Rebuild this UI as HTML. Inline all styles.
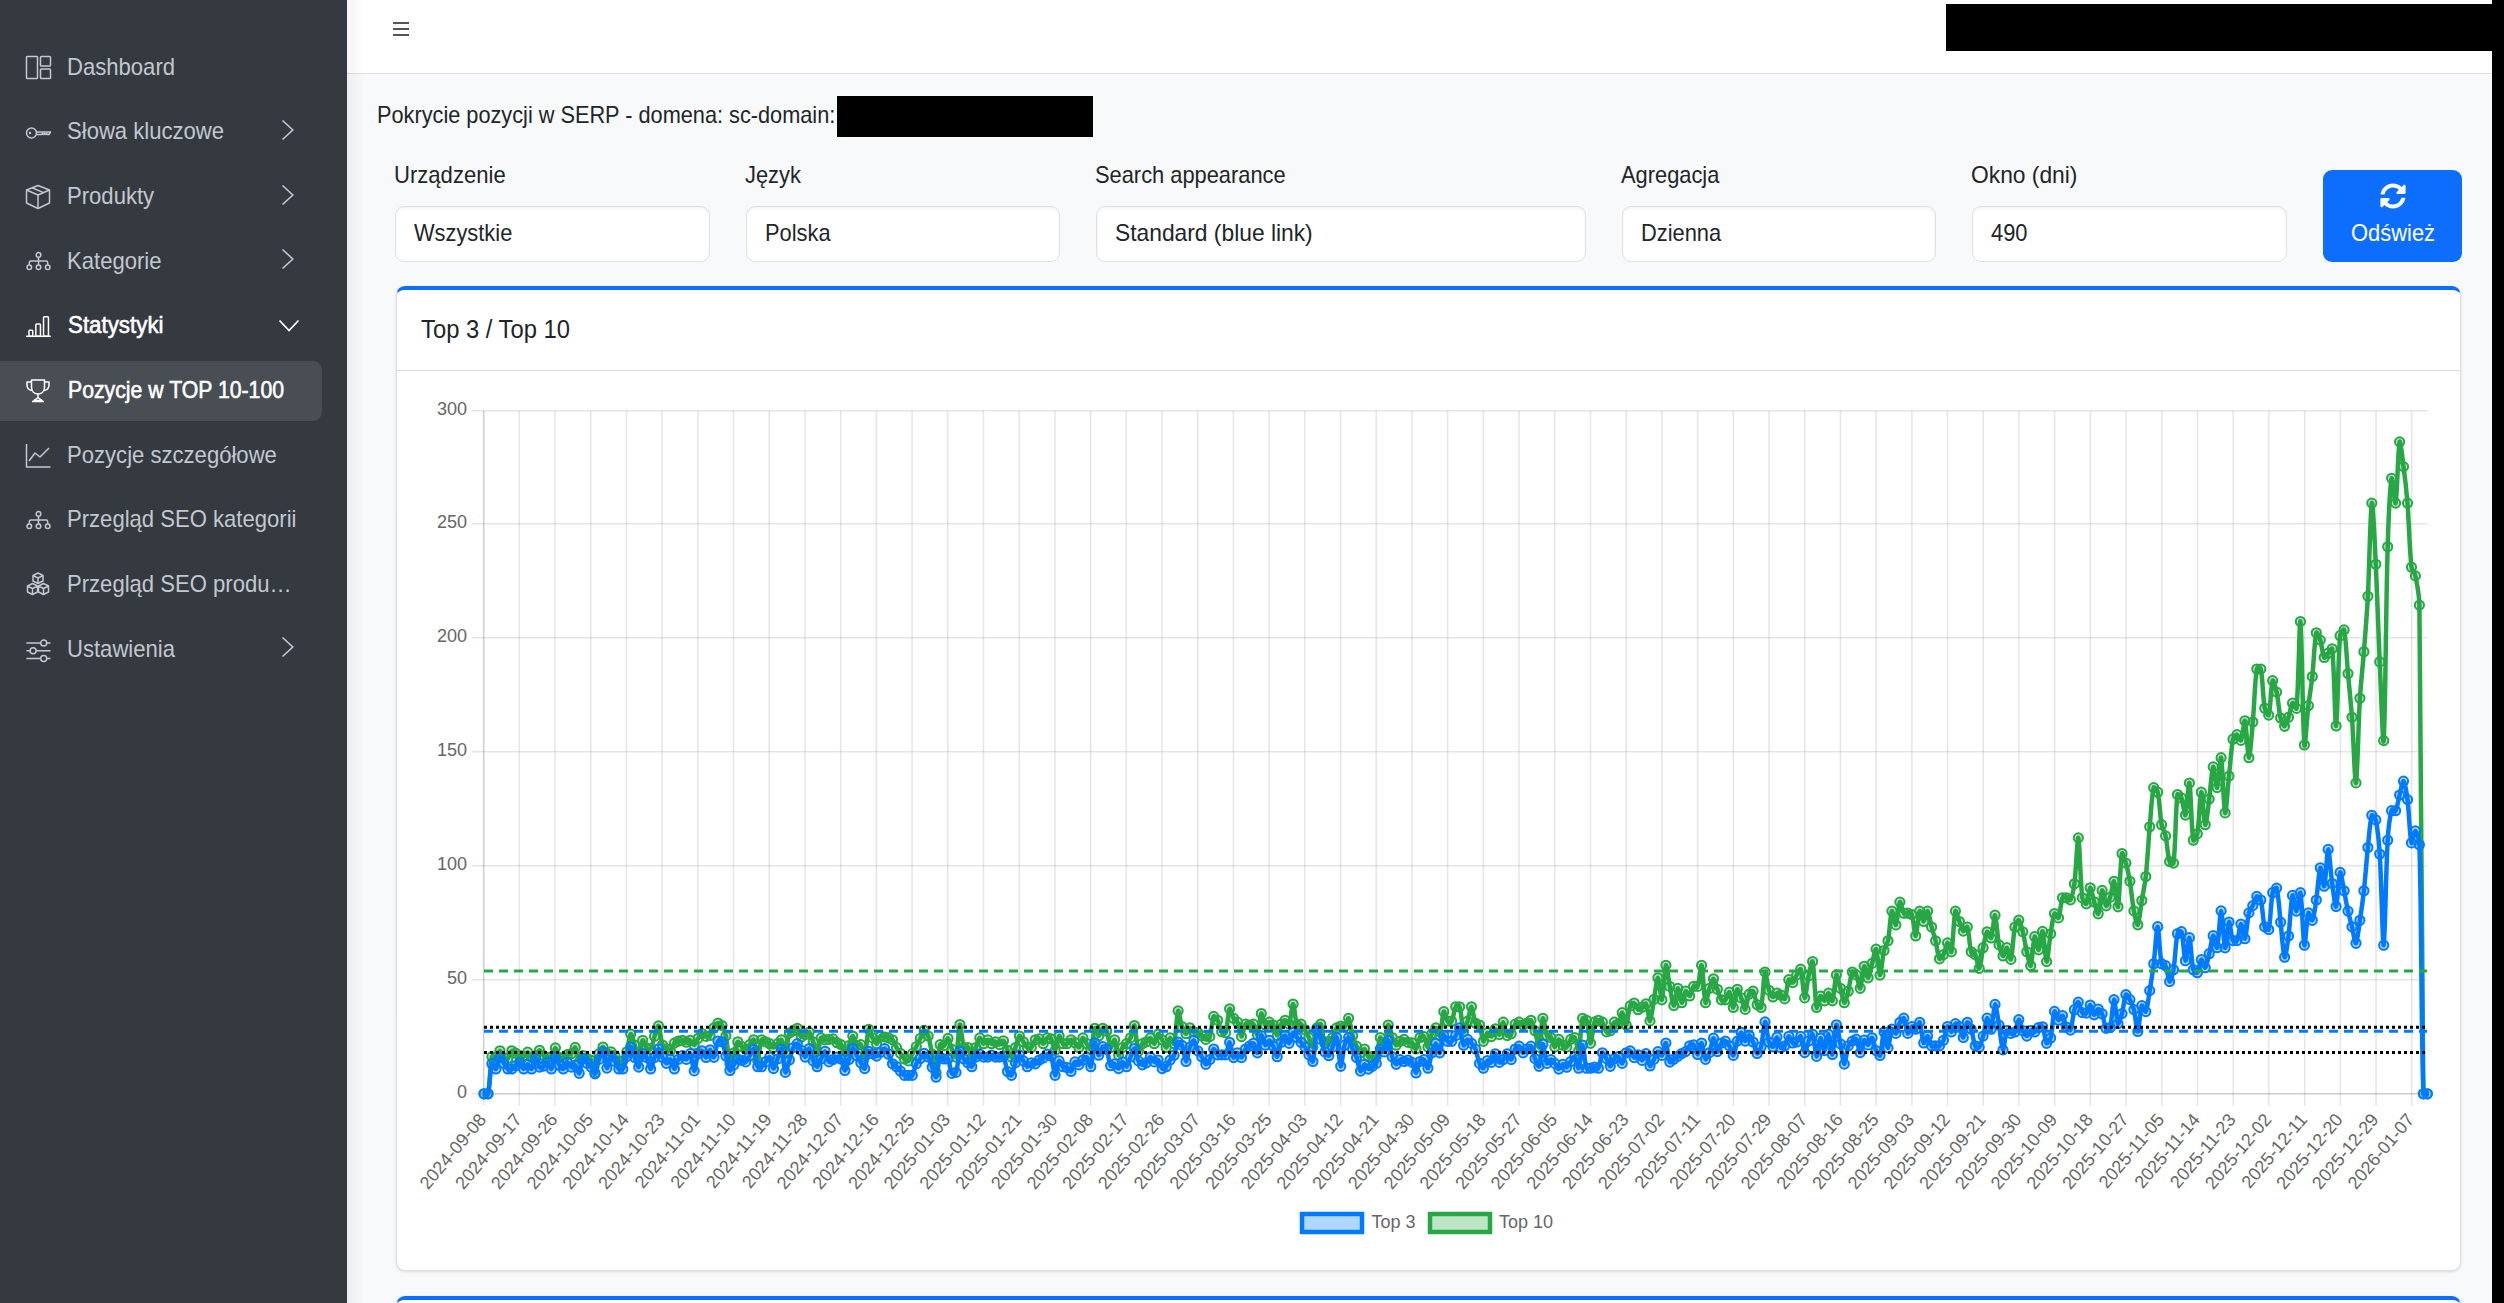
<!DOCTYPE html>
<html><head><meta charset="utf-8"><title>Pozycje w TOP 10-100</title>
<style>html,body{margin:0;padding:0;width:2504px;height:1303px;overflow:hidden;font-family:"Liberation Sans", sans-serif;background:#f8f9fa}</style>
</head><body>
<div style="position:absolute;left:347px;top:0;width:2145px;height:1303px;background:#f8f9fa"></div><div style="position:absolute;left:347px;top:0;width:2145px;height:73px;background:#fff;border-bottom:1px solid #dee2e6"></div><div style="position:absolute;left:393px;top:22px;width:16px;height:2px;background:#555"></div><div style="position:absolute;left:393px;top:28px;width:16px;height:2px;background:#555"></div><div style="position:absolute;left:393px;top:34px;width:16px;height:2px;background:#555"></div><div style="position:absolute;left:1946px;top:4px;width:546px;height:47px;background:#000"></div><div style="position:absolute;left:347px;top:0;width:18px;height:1303px;background:linear-gradient(to right,rgba(0,0,0,.045),rgba(0,0,0,0))"></div><div style="position:absolute;left:377.0px;top:101.3px;font-size:24px;line-height:normal;color:#212529;font-weight:400;white-space:nowrap;transform:scaleX(0.905);transform-origin:0 0;">Pokrycie pozycji w SERP - domena: sc-domain:</div><div style="position:absolute;left:837px;top:96px;width:256px;height:41px;background:#000"></div><div style="position:absolute;left:394.2px;top:161.2px;font-size:24px;line-height:normal;color:#212529;font-weight:400;white-space:nowrap;transform:scaleX(0.92);transform-origin:0 0;">Urządzenie</div><div style="position:absolute;left:395px;top:206px;width:315px;height:56px;box-sizing:border-box;background:#fff;border:1px solid #dee2e6;border-radius:9px;box-shadow:inset 0 1.5px 3px rgba(0,0,0,.05)"></div><div style="position:absolute;left:413.5px;top:218.9px;font-size:24px;line-height:normal;color:#212529;font-weight:400;white-space:nowrap;transform:scaleX(0.91);transform-origin:0 0;">Wszystkie</div><div style="position:absolute;left:745.2px;top:161.2px;font-size:24px;line-height:normal;color:#212529;font-weight:400;white-space:nowrap;transform:scaleX(0.91);transform-origin:0 0;">Język</div><div style="position:absolute;left:746px;top:206px;width:314px;height:56px;box-sizing:border-box;background:#fff;border:1px solid #dee2e6;border-radius:9px;box-shadow:inset 0 1.5px 3px rgba(0,0,0,.05)"></div><div style="position:absolute;left:764.5px;top:218.9px;font-size:24px;line-height:normal;color:#212529;font-weight:400;white-space:nowrap;transform:scaleX(0.91);transform-origin:0 0;">Polska</div><div style="position:absolute;left:1095.2px;top:161.2px;font-size:24px;line-height:normal;color:#212529;font-weight:400;white-space:nowrap;transform:scaleX(0.91);transform-origin:0 0;">Search appearance</div><div style="position:absolute;left:1096px;top:206px;width:490px;height:56px;box-sizing:border-box;background:#fff;border:1px solid #dee2e6;border-radius:9px;box-shadow:inset 0 1.5px 3px rgba(0,0,0,.05)"></div><div style="position:absolute;left:1114.5px;top:218.9px;font-size:24px;line-height:normal;color:#212529;font-weight:400;white-space:nowrap;transform:scaleX(0.95);transform-origin:0 0;">Standard (blue link)</div><div style="position:absolute;left:1621.2px;top:161.2px;font-size:24px;line-height:normal;color:#212529;font-weight:400;white-space:nowrap;transform:scaleX(0.91);transform-origin:0 0;">Agregacja</div><div style="position:absolute;left:1622px;top:206px;width:314px;height:56px;box-sizing:border-box;background:#fff;border:1px solid #dee2e6;border-radius:9px;box-shadow:inset 0 1.5px 3px rgba(0,0,0,.05)"></div><div style="position:absolute;left:1640.5px;top:218.9px;font-size:24px;line-height:normal;color:#212529;font-weight:400;white-space:nowrap;transform:scaleX(0.91);transform-origin:0 0;">Dzienna</div><div style="position:absolute;left:1971.2px;top:161.2px;font-size:24px;line-height:normal;color:#212529;font-weight:400;white-space:nowrap;transform:scaleX(0.95);transform-origin:0 0;">Okno (dni)</div><div style="position:absolute;left:1972px;top:206px;width:315px;height:56px;box-sizing:border-box;background:#fff;border:1px solid #dee2e6;border-radius:9px;box-shadow:inset 0 1.5px 3px rgba(0,0,0,.05)"></div><div style="position:absolute;left:1990.5px;top:218.9px;font-size:24px;line-height:normal;color:#212529;font-weight:400;white-space:nowrap;transform:scaleX(0.91);transform-origin:0 0;">490</div><div style="position:absolute;left:2323px;top:170px;width:139px;height:92px;background:#0d6efd;border-radius:9px"></div><svg style="position:absolute;left:2380px;top:183px" width="26" height="26" viewBox="0 0 512 512"><path fill="#fff" d="M370.72 133.28C339.458 104.008 298.888 87.962 255.848 88c-77.458.068-144.328 53.178-162.791 126.85-1.344 5.363-6.122 9.15-11.651 9.15H24.103c-7.498 0-13.194-6.807-11.807-14.176C33.933 94.924 134.813 8 256 8c66.448 0 126.791 26.136 171.315 68.685L463.03 40.97C478.149 25.851 504 36.559 504 57.941V192c0 13.255-10.745 24-24 24H345.941c-21.382 0-32.09-25.851-16.971-40.971l41.75-41.749zM32 296h134.059c21.382 0 32.09 25.851 16.971 40.971l-41.75 41.75c31.262 29.273 71.835 45.319 114.876 45.28 77.418-.07 144.315-53.144 162.787-126.849 1.344-5.363 6.122-9.15 11.651-9.15h57.304c7.498 0 13.194 6.807 11.807 14.176C478.067 417.076 377.187 504 256 504c-66.448 0-126.791-26.136-171.315-68.685L48.97 471.03C33.851 486.149 8 475.441 8 454.059V320c0-13.255 10.745-24 24-24z"/></svg><div style="position:absolute;left:2350.5px;top:219.3px;font-size:24px;line-height:normal;color:#fff;font-weight:400;white-space:nowrap;transform:scaleX(0.913);transform-origin:0 0;">Odśwież</div><div style="position:absolute;left:2492px;top:0;width:12px;height:1303px;background:#000"></div><div style="position:absolute;left:395.5px;top:286px;width:2065.5px;height:985px;box-sizing:border-box;background:#fff;border-radius:9px;border:1px solid rgba(0,0,0,.13);border-top:4px solid #0d6efd;box-shadow:0 1px 3px rgba(0,0,0,.12)"></div><div style="position:absolute;left:396px;top:369.5px;width:2064.5px;height:1.5px;background:#dedede"></div><div style="position:absolute;left:420.5px;top:313.5px;font-size:26px;line-height:normal;color:#212529;font-weight:400;white-space:nowrap;transform:scaleX(0.915);transform-origin:0 0;">Top 3 / Top 10</div><div style="position:absolute;left:395.5px;top:1296px;width:2065.5px;height:40px;box-sizing:border-box;background:#fff;border-radius:9px;border:1px solid rgba(0,0,0,.13);border-top:4px solid #0d6efd;box-shadow:0 1px 3px rgba(0,0,0,.12)"></div>
<div id="sb" style="position:absolute;left:0;top:0;width:347px;height:1303px;background:#343a40;"><div style="position:absolute;left:0;top:361px;width:322px;height:60px;background:rgba(255,255,255,.1);border-radius:0 9px 9px 0"></div><div style="position:absolute;left:67.0px;top:52.7px;font-size:24px;line-height:normal;color:#c2c7d0;font-weight:400;white-space:nowrap;transform:scaleX(0.92);transform-origin:0 0;">Dashboard</div><svg style="position:absolute;left:24.5px;top:54.9px" width="27" height="26" viewBox="0 0 27 26" fill="none" stroke="#c2c7d0" stroke-width="1.5" stroke-linejoin="round"><rect x="1.5" y="1.5" width="11" height="22" rx="0.8"/><rect x="15.5" y="1.5" width="10" height="9.5" rx="0.8"/><rect x="15.5" y="14" width="10" height="9.5" rx="0.8"/></svg><div style="position:absolute;left:67.0px;top:117.3px;font-size:24px;line-height:normal;color:#c2c7d0;font-weight:400;white-space:nowrap;transform:scaleX(0.92);transform-origin:0 0;">Słowa kluczowe</div><svg style="position:absolute;left:24.5px;top:119.6px" width="27" height="26" viewBox="0 0 27 26" fill="none" stroke="#c2c7d0" stroke-width="1.5" stroke-linejoin="round"><circle cx="6.5" cy="13" r="5"/><circle cx="5" cy="13" r="1.2" fill="#c2c7d0" stroke="none"/><path d="M11.5 12 H25.5 L24 14.5 H22.5 L21.5 13.5 L20.5 14.5 L19.5 13.5 L18.5 14.5 L17.5 13.5 L16.5 14.5 H11.5"/></svg><svg style="position:absolute;left:279.5px;top:119.1px" width="16" height="22" viewBox="0 0 16 22" fill="none" stroke="#c2c7d0" stroke-width="1.6"><path d="M2.5 1.5 L12.8 11 L2.5 20.5"/></svg><div style="position:absolute;left:67.0px;top:182.0px;font-size:24px;line-height:normal;color:#c2c7d0;font-weight:400;white-space:nowrap;transform:scaleX(0.92);transform-origin:0 0;">Produkty</div><svg style="position:absolute;left:24.5px;top:184.2px" width="27" height="26" viewBox="0 0 27 26" fill="none" stroke="#c2c7d0" stroke-width="1.5" stroke-linejoin="round"><path d="M13 1.5 L24.5 6 V19 L13 24.5 L1.5 19 V6 Z"/><path d="M1.5 6 L13 11 L24.5 6"/><path d="M13 11 V24.5"/><path d="M7 3.8 L18.5 8.6"/></svg><svg style="position:absolute;left:279.5px;top:183.7px" width="16" height="22" viewBox="0 0 16 22" fill="none" stroke="#c2c7d0" stroke-width="1.6"><path d="M2.5 1.5 L12.8 11 L2.5 20.5"/></svg><div style="position:absolute;left:67.0px;top:246.7px;font-size:24px;line-height:normal;color:#c2c7d0;font-weight:400;white-space:nowrap;transform:scaleX(0.92);transform-origin:0 0;">Kategorie</div><svg style="position:absolute;left:24.5px;top:248.9px" width="27" height="26" viewBox="0 0 27 26" fill="none" stroke="#c2c7d0" stroke-width="1.5" stroke-linejoin="round"><circle cx="13.5" cy="5.9" r="2.3"/><path d="M13.5 8.2 V15.9 M4.3 15.8 V13.5 Q4.3 11.9 5.9 11.9 H21.1 Q22.7 11.9 22.7 13.5 V15.8"/><circle cx="4.3" cy="18.2" r="2.3"/><circle cx="13.5" cy="18.2" r="2.3"/><circle cx="22.7" cy="18.2" r="2.3"/></svg><svg style="position:absolute;left:279.5px;top:248.4px" width="16" height="22" viewBox="0 0 16 22" fill="none" stroke="#c2c7d0" stroke-width="1.6"><path d="M2.5 1.5 L12.8 11 L2.5 20.5"/></svg><div style="position:absolute;left:67.5px;top:311.4px;font-size:24px;line-height:normal;color:#ffffff;font-weight:400;white-space:nowrap;transform:scaleX(0.93);transform-origin:0 0;-webkit-text-stroke:0.6px #fff;">Statystyki</div><svg style="position:absolute;left:24.5px;top:313.6px" width="27" height="26" viewBox="0 0 27 26" fill="none" stroke="#ffffff" stroke-width="1.5" stroke-linejoin="round"><path d="M1 22.3 H25.8"/><rect x="3.95" y="16.2" width="3.8" height="6.1" rx="0.8"/><rect x="10.85" y="10" width="4.6" height="12.3" rx="0.8"/><rect x="18.55" y="2.8" width="4.9" height="19.5" rx="0.8"/></svg><svg style="position:absolute;left:277px;top:319.1px" width="24" height="14" viewBox="0 0 24 14" fill="none" stroke="#fff" stroke-width="1.8"><path d="M2.5 1.5 L12 11.5 L21.5 1.5"/></svg><div style="position:absolute;left:67.5px;top:376.0px;font-size:24px;line-height:normal;color:#ffffff;font-weight:400;white-space:nowrap;transform:scaleX(0.885);transform-origin:0 0;-webkit-text-stroke:0.6px #fff;">Pozycje w TOP 10-100</div><svg style="position:absolute;left:24.5px;top:378.2px" width="27" height="26" viewBox="0 0 27 26" fill="none" stroke="#ffffff" stroke-width="1.5" stroke-linejoin="round"><path d="M6.5 2 H19.5 V9 C19.5 13.5 16.5 16 13 16 C9.5 16 6.5 13.5 6.5 9 Z"/><path d="M6.5 4 H2 V7 C2 10 4 12 7 12.5 M19.5 4 H24 V7 C24 10 22 12 19 12.5"/><path d="M13 16 V19 C13 20.5 10 21.5 9 22.5 H17 C16 21.5 13 20.5 13 19"/><path d="M7 23.5 H19"/></svg><div style="position:absolute;left:67.0px;top:440.7px;font-size:24px;line-height:normal;color:#c2c7d0;font-weight:400;white-space:nowrap;transform:scaleX(0.92);transform-origin:0 0;">Pozycje szczegółowe</div><svg style="position:absolute;left:24.5px;top:442.9px" width="27" height="26" viewBox="0 0 27 26" fill="none" stroke="#c2c7d0" stroke-width="1.5" stroke-linejoin="round"><path d="M1.5 1 V24 H25.5"/><path d="M4 18 L10 10 L15 14 L24 5"/></svg><div style="position:absolute;left:67.0px;top:505.4px;font-size:24px;line-height:normal;color:#c2c7d0;font-weight:400;white-space:nowrap;transform:scaleX(0.92);transform-origin:0 0;">Przegląd SEO kategorii</div><svg style="position:absolute;left:24.5px;top:507.6px" width="27" height="26" viewBox="0 0 27 26" fill="none" stroke="#c2c7d0" stroke-width="1.5" stroke-linejoin="round"><circle cx="13.5" cy="5.9" r="2.3"/><path d="M13.5 8.2 V15.9 M4.3 15.8 V13.5 Q4.3 11.9 5.9 11.9 H21.1 Q22.7 11.9 22.7 13.5 V15.8"/><circle cx="4.3" cy="18.2" r="2.3"/><circle cx="13.5" cy="18.2" r="2.3"/><circle cx="22.7" cy="18.2" r="2.3"/></svg><div style="position:absolute;left:67.0px;top:570.0px;font-size:24px;line-height:normal;color:#c2c7d0;font-weight:400;white-space:nowrap;transform:scaleX(0.92);transform-origin:0 0;">Przegląd SEO produ…</div><svg style="position:absolute;left:24.5px;top:572.3px" width="27" height="26" viewBox="0 0 27 26" fill="none" stroke="#c2c7d0" stroke-width="1.5" stroke-linejoin="round"><path d="M13 1 L18 3.5 V9 L13 11.5 L8 9 V3.5 Z M8 3.5 L13 6 L18 3.5 M13 6 V11.5"/><path d="M7.5 11.5 L12.5 14 V20 L7.5 22.5 L2.5 20 V14 Z M2.5 14 L7.5 16.5 L12.5 14 M7.5 16.5 V22.5"/><path d="M18.5 11.5 L23.5 14 V20 L18.5 22.5 L13.5 20 V14 Z M13.5 14 L18.5 16.5 L23.5 14 M18.5 16.5 V22.5"/></svg><div style="position:absolute;left:67.0px;top:634.7px;font-size:24px;line-height:normal;color:#c2c7d0;font-weight:400;white-space:nowrap;transform:scaleX(0.92);transform-origin:0 0;">Ustawienia</div><svg style="position:absolute;left:24.5px;top:636.9px" width="27" height="26" viewBox="0 0 27 26" fill="none" stroke="#c2c7d0" stroke-width="1.5" stroke-linejoin="round"><path d="M1.4 6.1 H15.7 M21.7 6.1 H25.5 M1.4 13.8 H5.1 M11.1 13.8 H25.5 M1.4 21.4 H15.7 M21.7 21.4 H25.5"/><circle cx="18.7" cy="6.1" r="3"/><circle cx="8.1" cy="13.8" r="3"/><circle cx="18.7" cy="21.4" r="3"/></svg><svg style="position:absolute;left:279.5px;top:636.4px" width="16" height="22" viewBox="0 0 16 22" fill="none" stroke="#c2c7d0" stroke-width="1.6"><path d="M2.5 1.5 L12.8 11 L2.5 20.5"/></svg></div>
<svg style="position:absolute;left:0;top:0" width="2504" height="1303" viewBox="0 0 2504 1303" font-family="Liberation Sans, sans-serif"><path d="M483.60 410.8V1105.7 M519.31 410.8V1105.7 M555.01 410.8V1105.7 M590.72 410.8V1105.7 M626.42 410.8V1105.7 M662.13 410.8V1105.7 M697.84 410.8V1105.7 M733.54 410.8V1105.7 M769.25 410.8V1105.7 M804.95 410.8V1105.7 M840.66 410.8V1105.7 M876.37 410.8V1105.7 M912.07 410.8V1105.7 M947.78 410.8V1105.7 M983.48 410.8V1105.7 M1019.19 410.8V1105.7 M1054.90 410.8V1105.7 M1090.60 410.8V1105.7 M1126.31 410.8V1105.7 M1162.01 410.8V1105.7 M1197.72 410.8V1105.7 M1233.43 410.8V1105.7 M1269.13 410.8V1105.7 M1304.84 410.8V1105.7 M1340.54 410.8V1105.7 M1376.25 410.8V1105.7 M1411.96 410.8V1105.7 M1447.66 410.8V1105.7 M1483.37 410.8V1105.7 M1519.07 410.8V1105.7 M1554.78 410.8V1105.7 M1590.49 410.8V1105.7 M1626.19 410.8V1105.7 M1661.90 410.8V1105.7 M1697.60 410.8V1105.7 M1733.31 410.8V1105.7 M1769.02 410.8V1105.7 M1804.72 410.8V1105.7 M1840.43 410.8V1105.7 M1876.13 410.8V1105.7 M1911.84 410.8V1105.7 M1947.55 410.8V1105.7 M1983.25 410.8V1105.7 M2018.96 410.8V1105.7 M2054.66 410.8V1105.7 M2090.37 410.8V1105.7 M2126.08 410.8V1105.7 M2161.78 410.8V1105.7 M2197.49 410.8V1105.7 M2233.19 410.8V1105.7 M2268.90 410.8V1105.7 M2304.61 410.8V1105.7 M2340.31 410.8V1105.7 M2376.02 410.8V1105.7 M2411.72 410.8V1105.7" stroke="rgba(0,0,0,0.1)" stroke-width="1.5" fill="none"/><path d="M472 1093.80H2427.5 M472 979.80H2427.5 M472 865.80H2427.5 M472 751.80H2427.5 M472 637.80H2427.5 M472 523.80H2427.5 M472 410.80H2427.5" stroke="rgba(0,0,0,0.1)" stroke-width="1.5" fill="none"/><path d="M483.8 410.8V1093.8 M483.6 1093.8H2427.5" stroke="rgba(0,0,0,0.1)" stroke-width="1.5" fill="none"/><text x="467" y="1098.3" font-size="18" fill="#666" text-anchor="end">0</text><text x="467" y="984.3" font-size="18" fill="#666" text-anchor="end">50</text><text x="467" y="870.3" font-size="18" fill="#666" text-anchor="end">100</text><text x="467" y="756.3" font-size="18" fill="#666" text-anchor="end">150</text><text x="467" y="642.3" font-size="18" fill="#666" text-anchor="end">200</text><text x="467" y="528.3" font-size="18" fill="#666" text-anchor="end">250</text><text x="467" y="415.3" font-size="18" fill="#666" text-anchor="end">300</text><text transform="translate(487.1,1120) rotate(-50)" font-size="18" fill="#666" text-anchor="end">2024-09-08</text><text transform="translate(522.8,1120) rotate(-50)" font-size="18" fill="#666" text-anchor="end">2024-09-17</text><text transform="translate(558.5,1120) rotate(-50)" font-size="18" fill="#666" text-anchor="end">2024-09-26</text><text transform="translate(594.2,1120) rotate(-50)" font-size="18" fill="#666" text-anchor="end">2024-10-05</text><text transform="translate(629.9,1120) rotate(-50)" font-size="18" fill="#666" text-anchor="end">2024-10-14</text><text transform="translate(665.6,1120) rotate(-50)" font-size="18" fill="#666" text-anchor="end">2024-10-23</text><text transform="translate(701.3,1120) rotate(-50)" font-size="18" fill="#666" text-anchor="end">2024-11-01</text><text transform="translate(737.0,1120) rotate(-50)" font-size="18" fill="#666" text-anchor="end">2024-11-10</text><text transform="translate(772.7,1120) rotate(-50)" font-size="18" fill="#666" text-anchor="end">2024-11-19</text><text transform="translate(808.5,1120) rotate(-50)" font-size="18" fill="#666" text-anchor="end">2024-11-28</text><text transform="translate(844.2,1120) rotate(-50)" font-size="18" fill="#666" text-anchor="end">2024-12-07</text><text transform="translate(879.9,1120) rotate(-50)" font-size="18" fill="#666" text-anchor="end">2024-12-16</text><text transform="translate(915.6,1120) rotate(-50)" font-size="18" fill="#666" text-anchor="end">2024-12-25</text><text transform="translate(951.3,1120) rotate(-50)" font-size="18" fill="#666" text-anchor="end">2025-01-03</text><text transform="translate(987.0,1120) rotate(-50)" font-size="18" fill="#666" text-anchor="end">2025-01-12</text><text transform="translate(1022.7,1120) rotate(-50)" font-size="18" fill="#666" text-anchor="end">2025-01-21</text><text transform="translate(1058.4,1120) rotate(-50)" font-size="18" fill="#666" text-anchor="end">2025-01-30</text><text transform="translate(1094.1,1120) rotate(-50)" font-size="18" fill="#666" text-anchor="end">2025-02-08</text><text transform="translate(1129.8,1120) rotate(-50)" font-size="18" fill="#666" text-anchor="end">2025-02-17</text><text transform="translate(1165.5,1120) rotate(-50)" font-size="18" fill="#666" text-anchor="end">2025-02-26</text><text transform="translate(1201.2,1120) rotate(-50)" font-size="18" fill="#666" text-anchor="end">2025-03-07</text><text transform="translate(1236.9,1120) rotate(-50)" font-size="18" fill="#666" text-anchor="end">2025-03-16</text><text transform="translate(1272.6,1120) rotate(-50)" font-size="18" fill="#666" text-anchor="end">2025-03-25</text><text transform="translate(1308.3,1120) rotate(-50)" font-size="18" fill="#666" text-anchor="end">2025-04-03</text><text transform="translate(1344.0,1120) rotate(-50)" font-size="18" fill="#666" text-anchor="end">2025-04-12</text><text transform="translate(1379.8,1120) rotate(-50)" font-size="18" fill="#666" text-anchor="end">2025-04-21</text><text transform="translate(1415.5,1120) rotate(-50)" font-size="18" fill="#666" text-anchor="end">2025-04-30</text><text transform="translate(1451.2,1120) rotate(-50)" font-size="18" fill="#666" text-anchor="end">2025-05-09</text><text transform="translate(1486.9,1120) rotate(-50)" font-size="18" fill="#666" text-anchor="end">2025-05-18</text><text transform="translate(1522.6,1120) rotate(-50)" font-size="18" fill="#666" text-anchor="end">2025-05-27</text><text transform="translate(1558.3,1120) rotate(-50)" font-size="18" fill="#666" text-anchor="end">2025-06-05</text><text transform="translate(1594.0,1120) rotate(-50)" font-size="18" fill="#666" text-anchor="end">2025-06-14</text><text transform="translate(1629.7,1120) rotate(-50)" font-size="18" fill="#666" text-anchor="end">2025-06-23</text><text transform="translate(1665.4,1120) rotate(-50)" font-size="18" fill="#666" text-anchor="end">2025-07-02</text><text transform="translate(1701.1,1120) rotate(-50)" font-size="18" fill="#666" text-anchor="end">2025-07-11</text><text transform="translate(1736.8,1120) rotate(-50)" font-size="18" fill="#666" text-anchor="end">2025-07-20</text><text transform="translate(1772.5,1120) rotate(-50)" font-size="18" fill="#666" text-anchor="end">2025-07-29</text><text transform="translate(1808.2,1120) rotate(-50)" font-size="18" fill="#666" text-anchor="end">2025-08-07</text><text transform="translate(1843.9,1120) rotate(-50)" font-size="18" fill="#666" text-anchor="end">2025-08-16</text><text transform="translate(1879.6,1120) rotate(-50)" font-size="18" fill="#666" text-anchor="end">2025-08-25</text><text transform="translate(1915.3,1120) rotate(-50)" font-size="18" fill="#666" text-anchor="end">2025-09-03</text><text transform="translate(1951.0,1120) rotate(-50)" font-size="18" fill="#666" text-anchor="end">2025-09-12</text><text transform="translate(1986.8,1120) rotate(-50)" font-size="18" fill="#666" text-anchor="end">2025-09-21</text><text transform="translate(2022.5,1120) rotate(-50)" font-size="18" fill="#666" text-anchor="end">2025-09-30</text><text transform="translate(2058.2,1120) rotate(-50)" font-size="18" fill="#666" text-anchor="end">2025-10-09</text><text transform="translate(2093.9,1120) rotate(-50)" font-size="18" fill="#666" text-anchor="end">2025-10-18</text><text transform="translate(2129.6,1120) rotate(-50)" font-size="18" fill="#666" text-anchor="end">2025-10-27</text><text transform="translate(2165.3,1120) rotate(-50)" font-size="18" fill="#666" text-anchor="end">2025-11-05</text><text transform="translate(2201.0,1120) rotate(-50)" font-size="18" fill="#666" text-anchor="end">2025-11-14</text><text transform="translate(2236.7,1120) rotate(-50)" font-size="18" fill="#666" text-anchor="end">2025-11-23</text><text transform="translate(2272.4,1120) rotate(-50)" font-size="18" fill="#666" text-anchor="end">2025-12-02</text><text transform="translate(2308.1,1120) rotate(-50)" font-size="18" fill="#666" text-anchor="end">2025-12-11</text><text transform="translate(2343.8,1120) rotate(-50)" font-size="18" fill="#666" text-anchor="end">2025-12-20</text><text transform="translate(2379.5,1120) rotate(-50)" font-size="18" fill="#666" text-anchor="end">2025-12-29</text><text transform="translate(2415.2,1120) rotate(-50)" font-size="18" fill="#666" text-anchor="end">2026-01-07</text><path d="M484.0 1093.8C485.2 1093.8 487.7 1093.8 488.0 1093.8C490.1 1083.7 489.8 1066.4 491.9 1056.6C492.2 1055.5 495.1 1058.1 495.9 1057.5C497.5 1056.4 498.7 1050.8 499.9 1050.8C501.1 1050.8 502.3 1056.0 503.8 1057.5C504.6 1058.3 507.0 1059.1 507.8 1058.5C509.4 1057.1 510.2 1051.8 511.8 1050.8C512.6 1050.2 514.5 1052.5 515.7 1053.2C516.9 1053.9 518.4 1055.1 519.7 1055.6C520.8 1056.1 522.7 1057.0 523.7 1056.6C525.1 1056.0 526.5 1052.1 527.6 1052.2C528.9 1052.4 530.2 1056.9 531.6 1057.5C532.5 1057.9 534.6 1056.5 535.6 1055.6C537.0 1054.3 538.3 1050.3 539.5 1050.3C540.7 1050.3 542.1 1054.3 543.5 1055.6C544.4 1056.5 546.2 1057.4 547.5 1057.5C548.6 1057.6 550.7 1057.4 551.4 1056.6C553.1 1054.5 554.3 1047.8 555.4 1047.9C556.6 1048.1 557.6 1055.4 559.4 1057.5C560.0 1058.3 562.3 1057.9 563.3 1057.5C564.6 1057.0 566.0 1055.3 567.3 1054.6C568.4 1054.1 570.4 1054.4 571.3 1053.7C572.8 1052.3 574.4 1046.6 575.2 1047.4C576.8 1049.2 577.6 1060.7 579.2 1062.3C580.0 1063.1 581.7 1056.3 583.1 1055.6C584.1 1055.1 585.9 1057.7 587.1 1058.5C588.2 1059.1 590.5 1059.3 591.1 1060.4C592.9 1063.6 594.1 1073.7 595.0 1072.8C596.5 1071.6 597.3 1059.2 599.0 1053.7C599.7 1051.5 601.8 1047.0 603.0 1047.0C604.2 1047.0 605.4 1052.8 606.9 1053.7C607.8 1054.2 609.9 1051.5 610.9 1051.8C612.2 1052.1 613.8 1054.3 614.9 1055.6C616.2 1057.2 617.3 1060.2 618.8 1061.3C619.7 1062.0 622.2 1062.1 622.8 1061.3C624.5 1059.3 625.9 1054.7 626.8 1051.8C628.3 1046.5 629.3 1035.3 630.7 1034.0C631.7 1033.2 633.6 1041.7 634.7 1045.0C636.0 1048.8 637.7 1058.1 638.7 1057.5C640.0 1056.7 641.0 1042.2 642.6 1040.3C643.4 1039.3 645.0 1046.2 646.6 1047.9C647.4 1048.8 650.0 1049.7 650.6 1048.9C652.4 1046.3 653.3 1040.1 654.5 1036.4C655.6 1033.2 657.6 1024.9 658.5 1025.9C660.0 1027.5 660.6 1039.7 662.5 1045.0C663.0 1046.6 665.1 1047.9 666.4 1048.9C667.5 1049.6 669.6 1051.4 670.4 1050.8C672.0 1049.7 672.8 1045.0 674.4 1043.1C675.2 1042.2 677.1 1041.7 678.3 1041.2C679.5 1040.8 681.2 1040.1 682.3 1040.3C683.5 1040.4 685.1 1042.2 686.3 1042.2C687.5 1042.2 689.2 1039.9 690.2 1040.3C691.6 1040.8 693.1 1045.3 694.2 1045.0C695.5 1044.7 696.8 1040.3 698.2 1038.3C699.2 1036.8 700.8 1033.9 702.1 1033.5C703.2 1033.3 704.8 1036.1 706.1 1036.4C707.2 1036.7 709.3 1036.3 710.1 1035.5C711.7 1033.7 712.6 1030.0 714.0 1027.8C715.0 1026.2 716.6 1023.4 718.0 1023.0C719.0 1022.7 721.3 1024.3 722.0 1025.5C723.6 1028.2 725.2 1032.7 725.9 1036.0C727.6 1044.2 728.2 1060.3 729.9 1063.8C730.6 1065.3 732.7 1056.1 733.9 1052.8C735.0 1049.5 736.3 1043.0 737.8 1041.8C738.6 1041.1 740.5 1045.3 741.8 1046.6C742.8 1047.6 744.7 1049.7 745.8 1049.4C747.1 1049.1 748.5 1046.1 749.7 1044.6C750.9 1043.2 753.2 1038.7 753.7 1039.8C755.5 1043.6 756.5 1060.9 757.7 1060.9C758.8 1060.9 759.6 1044.6 761.6 1039.8C762.0 1038.9 764.4 1041.2 765.6 1041.8C766.8 1042.3 768.5 1042.9 769.6 1043.7C770.9 1044.6 772.3 1047.5 773.5 1047.5C774.7 1047.5 776.3 1044.8 777.5 1043.7C778.7 1042.5 780.8 1039.0 781.5 1039.8C783.2 1041.9 784.5 1054.1 785.4 1053.3C786.8 1052.1 787.4 1038.6 789.4 1033.1C789.8 1031.9 792.2 1031.5 793.3 1030.7C794.5 1030.0 796.5 1027.7 797.3 1028.3C798.9 1029.6 799.7 1035.7 801.3 1037.0C802.1 1037.6 804.1 1035.3 805.2 1034.6C806.4 1033.9 808.5 1031.5 809.2 1032.2C810.9 1033.7 812.2 1038.8 813.2 1041.8C814.5 1045.7 816.1 1055.7 817.1 1055.2C818.5 1054.5 819.2 1041.6 821.1 1037.9C821.6 1037.0 823.8 1039.6 825.1 1039.8C826.2 1040.0 827.9 1039.5 829.0 1039.4C830.2 1039.2 832.0 1038.5 833.0 1038.9C834.4 1039.5 835.7 1041.8 837.0 1042.7C838.0 1043.5 840.3 1043.6 840.9 1044.6C842.7 1047.3 843.7 1055.0 844.9 1055.2C846.0 1055.3 847.7 1048.5 848.9 1045.6C850.1 1042.7 851.6 1036.0 852.8 1036.0C854.0 1036.0 855.1 1043.7 856.8 1045.6C857.5 1046.3 860.2 1043.8 860.8 1044.6C862.6 1047.3 864.0 1058.6 864.7 1057.1C866.4 1054.0 866.9 1033.6 868.7 1029.3C869.3 1027.8 871.3 1035.4 872.7 1037.9C873.7 1039.8 875.6 1043.9 876.6 1043.7C877.9 1043.4 879.0 1037.4 880.6 1036.0C881.4 1035.4 883.4 1036.7 884.6 1037.0C885.8 1037.3 887.4 1037.5 888.5 1037.9C889.8 1038.4 891.7 1038.9 892.5 1039.8C894.1 1041.7 895.1 1045.3 896.5 1047.5C897.5 1049.3 899.2 1051.5 900.4 1053.3C901.6 1055.0 902.9 1057.6 904.4 1059.0C905.3 1059.9 907.5 1061.5 908.4 1060.9C909.9 1059.9 911.1 1055.9 912.3 1053.7C913.5 1051.6 915.2 1048.7 916.3 1046.6C917.5 1044.1 919.1 1040.8 920.3 1038.4C921.4 1036.0 922.9 1030.7 924.2 1030.3C925.3 1029.9 927.5 1034.0 928.2 1036.0C929.9 1041.2 931.0 1048.8 932.2 1054.2C933.3 1059.7 935.2 1073.6 936.1 1072.4C937.6 1070.7 938.0 1051.7 940.1 1044.6C940.4 1043.6 943.3 1046.2 944.1 1045.6C945.6 1044.3 947.0 1037.9 948.0 1038.4C949.4 1039.1 950.6 1046.2 952.0 1049.4C953.0 1051.8 955.5 1058.7 956.0 1057.1C957.8 1051.2 958.5 1026.2 959.9 1024.5C960.9 1023.3 961.9 1041.6 963.9 1047.5C964.2 1048.5 967.2 1046.7 967.9 1047.5C969.6 1049.6 970.6 1057.1 971.8 1057.1C973.0 1057.1 974.6 1050.4 975.8 1047.5C977.0 1044.6 978.3 1038.6 979.8 1037.9C980.7 1037.5 982.4 1043.4 983.7 1043.7C984.8 1043.9 986.5 1039.8 987.7 1039.8C988.9 1039.8 990.3 1043.4 991.6 1043.7C992.7 1043.9 994.5 1041.6 995.6 1041.8C996.9 1041.9 998.5 1044.8 999.6 1044.6C1000.8 1044.5 1002.7 1040.2 1003.5 1040.8C1005.1 1041.9 1006.2 1047.6 1007.5 1050.4C1008.5 1052.5 1010.5 1057.5 1011.5 1057.1C1012.8 1056.6 1014.3 1050.4 1015.4 1047.5C1016.7 1044.1 1017.9 1037.1 1019.4 1036.0C1020.3 1035.4 1022.2 1040.0 1023.4 1041.8C1024.6 1043.5 1025.8 1046.4 1027.3 1047.5C1028.2 1048.1 1030.6 1048.2 1031.3 1047.5C1032.9 1045.9 1033.7 1041.6 1035.3 1039.8C1036.0 1039.0 1038.3 1038.4 1039.2 1038.9C1040.7 1039.6 1042.1 1043.8 1043.2 1043.7C1044.5 1043.5 1045.7 1038.8 1047.2 1037.9C1048.0 1037.4 1050.5 1037.9 1051.1 1038.9C1052.9 1041.7 1054.0 1050.8 1055.1 1050.4C1056.4 1049.9 1057.6 1037.3 1059.1 1036.0C1059.9 1035.3 1061.4 1042.1 1063.0 1043.7C1063.8 1044.4 1066.0 1044.2 1067.0 1043.7C1068.4 1043.0 1069.7 1040.0 1071.0 1039.8C1072.1 1039.7 1073.9 1041.7 1074.9 1042.7C1076.3 1044.0 1078.0 1048.0 1078.9 1047.5C1080.4 1046.6 1081.4 1038.6 1082.9 1037.9C1083.8 1037.5 1085.6 1042.0 1086.8 1043.7C1088.0 1045.4 1090.2 1050.6 1090.8 1049.4C1092.6 1046.0 1093.1 1031.2 1094.8 1028.3C1095.4 1027.2 1097.5 1036.0 1098.7 1036.0C1099.9 1036.0 1101.2 1029.3 1102.7 1028.3C1103.6 1027.8 1106.1 1029.9 1106.7 1031.2C1108.5 1035.7 1109.1 1045.8 1110.6 1047.5C1111.4 1048.4 1113.8 1039.0 1114.6 1039.8C1116.1 1041.3 1117.0 1053.7 1118.6 1055.2C1119.4 1056.0 1121.1 1049.6 1122.5 1047.5C1123.5 1046.2 1125.4 1044.9 1126.5 1043.7C1127.8 1042.1 1129.6 1039.8 1130.5 1037.9C1132.0 1034.4 1133.6 1024.1 1134.4 1025.5C1136.0 1028.1 1136.6 1047.2 1138.4 1051.3C1139.0 1052.7 1140.8 1045.6 1142.4 1043.7C1143.2 1042.7 1145.3 1042.5 1146.3 1041.8C1147.6 1040.8 1149.2 1037.7 1150.3 1037.9C1151.6 1038.2 1153.3 1044.1 1154.3 1043.7C1155.7 1043.0 1156.8 1034.8 1158.2 1034.1C1159.2 1033.6 1161.1 1038.0 1162.2 1039.8C1163.5 1042.1 1165.1 1047.8 1166.2 1047.5C1167.5 1047.2 1168.7 1038.6 1170.1 1037.9C1171.1 1037.5 1173.7 1045.1 1174.1 1043.7C1176.0 1037.0 1176.5 1014.3 1178.1 1010.9C1178.8 1009.2 1180.4 1022.1 1182.0 1026.7C1182.8 1029.0 1184.7 1033.5 1186.0 1033.7C1187.1 1033.8 1188.6 1028.2 1189.9 1027.9C1191.0 1027.7 1192.5 1030.9 1193.9 1031.8C1194.9 1032.4 1196.8 1032.2 1197.9 1032.7C1199.2 1033.3 1200.7 1034.6 1201.8 1035.6C1203.1 1036.7 1204.6 1039.3 1205.8 1039.4C1206.9 1039.6 1209.3 1037.9 1209.8 1036.6C1211.7 1031.0 1211.9 1020.3 1213.7 1016.4C1214.2 1015.4 1217.0 1018.8 1217.7 1020.3C1219.3 1023.4 1219.9 1029.0 1221.7 1031.8C1222.3 1032.7 1225.3 1033.7 1225.6 1032.7C1227.7 1026.8 1227.9 1011.8 1229.6 1008.8C1230.3 1007.5 1232.0 1015.7 1233.6 1018.3C1234.4 1019.7 1236.9 1020.7 1237.5 1022.2C1239.3 1026.2 1240.2 1036.2 1241.5 1036.6C1242.6 1036.8 1243.7 1026.7 1245.5 1024.1C1246.0 1023.3 1248.2 1025.0 1249.4 1025.0C1250.6 1025.0 1252.8 1023.3 1253.4 1024.1C1255.2 1026.2 1256.6 1035.7 1257.4 1034.6C1258.9 1032.6 1259.8 1015.4 1261.3 1013.5C1262.2 1012.5 1263.6 1023.2 1265.3 1025.0C1266.0 1025.8 1268.1 1022.2 1269.3 1022.2C1270.5 1022.2 1272.5 1023.8 1273.2 1025.0C1274.9 1027.9 1276.1 1035.7 1277.2 1035.6C1278.4 1035.4 1279.5 1027.3 1281.2 1024.1C1281.9 1022.7 1283.9 1020.3 1285.1 1020.3C1286.3 1020.3 1288.6 1025.1 1289.1 1024.1C1291.0 1020.2 1291.9 1003.8 1293.1 1004.0C1294.3 1004.1 1295.0 1020.0 1297.0 1025.0C1297.4 1026.0 1300.1 1023.6 1301.0 1024.1C1302.5 1025.0 1303.9 1028.0 1305.0 1029.8C1306.3 1032.1 1307.8 1035.2 1308.9 1037.5C1310.2 1040.3 1312.1 1048.1 1312.9 1047.1C1314.4 1045.2 1315.0 1033.3 1316.9 1027.9C1317.4 1026.4 1320.3 1023.1 1320.8 1024.1C1322.7 1027.7 1322.8 1039.0 1324.8 1043.3C1325.2 1044.2 1327.7 1042.1 1328.8 1041.3C1330.1 1040.4 1331.9 1038.9 1332.7 1037.5C1334.3 1034.9 1335.0 1030.3 1336.7 1027.9C1337.4 1026.9 1339.4 1026.2 1340.7 1026.0C1341.8 1025.9 1343.9 1027.7 1344.6 1027.0C1346.3 1025.4 1347.8 1017.4 1348.6 1018.3C1350.1 1020.0 1351.1 1030.5 1352.6 1035.6C1353.5 1038.8 1355.1 1043.1 1356.5 1046.1C1357.5 1048.3 1359.1 1052.3 1360.5 1052.8C1361.5 1053.2 1363.5 1048.6 1364.5 1049.0C1365.9 1049.7 1366.8 1055.1 1368.4 1056.7C1369.2 1057.4 1371.2 1056.7 1372.4 1056.7C1373.6 1056.7 1375.9 1057.6 1376.3 1056.7C1378.3 1051.9 1378.8 1039.4 1380.3 1037.5C1381.1 1036.5 1383.5 1048.3 1384.3 1047.1C1385.9 1044.5 1386.7 1026.9 1388.2 1025.0C1389.1 1024.0 1390.8 1033.9 1392.2 1037.5C1393.2 1039.9 1394.7 1044.5 1396.2 1045.2C1397.1 1045.6 1398.8 1042.3 1400.1 1041.3C1401.2 1040.6 1403.0 1039.3 1404.1 1039.4C1405.4 1039.6 1406.8 1041.7 1408.1 1042.3C1409.1 1042.8 1411.2 1042.1 1412.0 1042.8C1413.6 1044.1 1415.1 1049.6 1416.0 1049.0C1417.5 1048.0 1418.2 1040.3 1420.0 1037.5C1420.6 1036.6 1423.3 1035.8 1423.9 1036.6C1425.7 1038.7 1426.8 1047.5 1427.9 1047.1C1429.2 1046.6 1430.3 1037.5 1431.9 1033.7C1432.7 1031.8 1434.8 1027.7 1435.8 1027.9C1437.2 1028.2 1439.2 1036.9 1439.8 1035.6C1441.6 1032.0 1442.1 1014.7 1443.8 1011.6C1444.5 1010.3 1446.0 1019.1 1447.7 1021.2C1448.4 1022.0 1451.2 1022.1 1451.7 1021.2C1453.6 1017.8 1453.8 1010.2 1455.7 1006.8C1456.2 1005.9 1459.3 1005.8 1459.6 1006.8C1461.7 1013.3 1462.0 1028.8 1463.6 1031.8C1464.3 1033.1 1466.5 1024.4 1467.6 1021.2C1468.9 1017.0 1470.4 1006.6 1471.5 1006.8C1472.8 1007.1 1473.6 1018.8 1475.5 1023.1C1476.0 1024.3 1479.0 1023.9 1479.5 1025.0C1481.4 1029.4 1481.9 1039.9 1483.4 1041.3C1484.3 1042.2 1485.9 1033.6 1487.4 1032.7C1488.3 1032.2 1490.4 1037.0 1491.4 1036.6C1492.8 1035.8 1494.0 1029.2 1495.3 1028.9C1496.4 1028.6 1498.5 1035.3 1499.3 1034.6C1500.8 1033.3 1502.1 1022.0 1503.3 1022.2C1504.5 1022.3 1505.4 1033.0 1507.2 1035.6C1507.8 1036.4 1510.5 1034.7 1511.2 1033.7C1512.9 1031.3 1513.5 1026.5 1515.2 1024.1C1515.9 1023.1 1518.0 1022.0 1519.1 1022.2C1520.4 1022.3 1521.8 1024.9 1523.1 1025.0C1524.2 1025.2 1525.9 1023.8 1527.1 1023.1C1528.3 1022.4 1530.3 1019.6 1531.0 1020.3C1532.7 1021.9 1534.0 1027.6 1535.0 1030.8C1536.4 1035.6 1538.1 1048.5 1539.0 1047.1C1540.5 1044.7 1541.4 1020.5 1542.9 1018.3C1543.8 1017.0 1545.0 1031.0 1546.9 1035.6C1547.4 1036.7 1550.1 1036.5 1550.9 1037.5C1552.5 1039.9 1553.5 1046.8 1554.8 1047.1C1555.9 1047.4 1557.5 1039.7 1558.8 1039.4C1559.9 1039.2 1561.3 1043.8 1562.8 1045.2C1563.7 1046.1 1565.9 1047.7 1566.7 1047.1C1568.3 1046.0 1569.1 1041.3 1570.7 1039.4C1571.5 1038.5 1574.1 1036.7 1574.7 1037.5C1576.5 1040.1 1577.9 1052.6 1578.6 1050.9C1580.3 1046.9 1580.5 1026.5 1582.6 1018.3C1582.9 1017.3 1586.2 1019.1 1586.5 1020.3C1588.5 1026.5 1589.3 1043.0 1590.5 1043.3C1591.7 1043.5 1592.5 1027.9 1594.5 1022.2C1594.9 1021.0 1597.3 1020.3 1598.4 1020.3C1599.6 1020.3 1601.7 1021.1 1602.4 1022.2C1604.1 1024.6 1604.7 1029.9 1606.4 1031.8C1607.0 1032.5 1609.6 1031.7 1610.3 1030.8C1612.0 1028.8 1612.7 1023.5 1614.3 1022.2C1615.1 1021.5 1617.6 1024.9 1618.3 1024.1C1620.0 1022.0 1621.1 1012.5 1622.2 1012.6C1623.5 1012.7 1625.3 1025.9 1626.2 1025.0C1627.6 1023.8 1628.3 1011.2 1630.2 1005.9C1630.7 1004.6 1633.2 1002.6 1634.1 1003.0C1635.6 1003.7 1636.6 1008.9 1638.1 1009.7C1639.0 1010.2 1640.9 1008.0 1642.1 1007.2C1643.3 1006.2 1645.5 1002.9 1646.0 1003.8C1647.9 1007.0 1648.9 1021.5 1650.0 1020.9C1651.3 1020.2 1652.8 1005.8 1654.0 999.4C1655.2 992.9 1656.8 977.7 1657.9 977.8C1659.1 977.9 1661.0 1001.3 1661.9 999.8C1663.3 997.6 1664.4 967.8 1665.9 965.3C1666.8 963.8 1668.6 980.1 1669.8 986.4C1671.0 992.2 1672.6 1005.3 1673.8 1005.6C1674.9 1005.9 1676.5 988.8 1677.8 988.3C1678.9 987.9 1680.4 1002.2 1681.7 1002.7C1682.8 1003.1 1684.1 992.5 1685.7 991.2C1686.5 990.5 1688.8 996.5 1689.7 996.0C1691.2 995.1 1691.9 988.5 1693.6 986.4C1694.3 985.6 1697.2 987.4 1697.6 986.4C1699.6 981.1 1700.7 963.6 1701.6 965.3C1703.1 968.4 1703.8 997.8 1705.5 1002.7C1706.2 1004.7 1708.1 992.6 1709.5 988.3C1710.5 985.4 1712.3 978.6 1713.5 978.8C1714.7 978.9 1716.2 986.1 1717.4 989.3C1718.6 992.5 1719.6 997.5 1721.4 999.8C1722.0 1000.7 1724.6 1000.6 1725.4 999.8C1727.0 998.3 1728.5 991.4 1729.3 992.2C1730.9 993.7 1732.2 1007.9 1733.3 1007.5C1734.6 1007.0 1735.7 991.2 1737.3 989.3C1738.1 988.3 1740.2 995.3 1741.2 997.9C1742.6 1001.3 1744.2 1009.9 1745.2 1009.4C1746.5 1008.8 1747.3 998.3 1749.2 994.1C1749.7 992.8 1752.5 990.4 1753.1 991.2C1754.9 993.6 1755.3 1001.0 1757.1 1004.6C1757.7 1005.9 1760.8 1008.7 1761.1 1007.5C1763.1 998.9 1763.5 975.4 1765.0 972.0C1765.8 970.3 1767.3 985.0 1769.0 990.3C1769.7 992.5 1771.6 996.5 1773.0 997.0C1773.9 997.3 1775.6 993.5 1776.9 993.1C1778.0 992.9 1779.8 994.3 1780.9 995.0C1782.2 996.0 1784.3 999.9 1784.8 998.9C1786.7 995.3 1786.9 983.6 1788.8 979.7C1789.3 978.7 1791.9 983.1 1792.8 982.6C1794.3 981.7 1795.4 977.1 1796.7 974.9C1797.8 973.1 1800.3 967.8 1800.7 969.2C1802.6 974.7 1803.3 996.8 1804.7 997.9C1805.7 998.8 1807.2 982.4 1808.6 975.9C1809.6 971.5 1812.0 959.2 1812.6 961.5C1814.4 968.7 1814.7 999.3 1816.6 1007.5C1817.1 1009.7 1819.0 997.3 1820.5 996.0C1821.3 995.3 1823.5 1001.2 1824.5 1000.8C1825.9 1000.3 1827.3 993.1 1828.5 993.1C1829.7 993.1 1831.8 1002.2 1832.4 1000.8C1834.2 996.7 1834.9 977.4 1836.4 974.9C1837.2 973.6 1839.2 984.3 1840.4 988.3C1841.6 992.6 1843.0 1002.2 1844.3 1002.7C1845.4 1003.1 1847.4 994.7 1848.3 991.2C1849.8 985.5 1850.4 976.0 1852.3 972.0C1852.7 971.1 1855.6 973.7 1856.2 974.9C1858.0 978.5 1859.3 989.3 1860.2 988.3C1861.7 986.7 1862.6 968.3 1864.2 966.3C1865.0 965.2 1867.1 978.2 1868.1 977.8C1869.4 977.3 1870.9 967.7 1872.1 963.4C1873.3 959.1 1875.2 947.8 1876.1 949.1C1877.6 951.3 1878.8 974.9 1880.0 975.1C1881.2 975.3 1882.3 957.7 1884.0 950.5C1884.7 947.4 1887.3 943.8 1888.0 940.8C1889.7 932.0 1890.3 914.3 1891.9 911.1C1892.7 909.5 1895.0 925.9 1895.9 924.9C1897.4 923.2 1898.3 904.4 1899.9 902.1C1900.7 900.9 1902.0 910.7 1903.8 913.2C1904.4 914.0 1906.6 913.0 1907.8 913.2C1909.0 913.4 1911.4 913.4 1911.8 914.5C1913.8 920.3 1914.6 936.4 1915.7 936.0C1917.0 935.4 1918.0 914.1 1919.7 911.1C1920.4 909.8 1922.5 921.5 1923.7 921.5C1924.8 921.5 1926.7 910.4 1927.6 911.1C1929.0 912.1 1930.3 922.2 1931.6 927.0C1932.7 931.1 1934.5 936.6 1935.6 940.8C1936.9 946.1 1937.7 955.6 1939.5 958.8C1940.1 959.7 1942.7 956.1 1943.5 954.6C1945.1 951.4 1946.1 943.3 1947.5 942.9C1948.5 942.5 1951.0 953.7 1951.4 951.8C1953.3 944.2 1953.5 918.3 1955.4 911.1C1955.9 909.1 1958.1 918.4 1959.4 921.5C1960.5 924.4 1961.8 930.1 1963.3 931.1C1964.2 931.7 1966.8 925.8 1967.3 927.0C1969.2 932.0 1969.3 944.9 1971.2 951.8C1971.6 953.2 1974.6 953.4 1975.2 954.6C1977.0 958.3 1978.2 969.3 1979.2 968.4C1980.6 967.2 1981.8 953.9 1983.1 947.7C1984.2 942.9 1985.5 933.8 1987.1 931.8C1987.9 930.9 1990.5 939.2 1991.1 938.0C1992.9 934.3 1994.0 914.3 1995.0 915.2C1996.4 916.4 1997.3 936.2 1999.0 944.9C1999.7 948.4 2001.6 955.5 2003.0 956.0C2004.0 956.4 2005.9 947.3 2006.9 947.7C2008.3 948.3 2010.3 961.2 2010.9 959.4C2012.6 954.9 2013.0 936.5 2014.9 927.0C2015.3 924.7 2017.9 919.5 2018.8 920.1C2020.3 921.0 2021.9 928.2 2022.8 931.8C2024.3 937.7 2025.4 945.9 2026.8 951.8C2027.8 956.0 2030.0 967.2 2030.7 965.7C2032.3 962.6 2033.1 939.9 2034.7 936.6C2035.5 935.1 2037.7 950.4 2038.7 949.8C2040.0 948.9 2041.7 930.1 2042.6 931.4C2044.1 933.6 2045.4 961.2 2046.6 961.6C2047.7 961.9 2049.2 942.1 2050.6 933.8C2051.6 927.7 2052.7 917.2 2054.5 913.5C2055.1 912.4 2058.0 918.9 2058.5 917.9C2060.3 914.2 2060.5 902.8 2062.5 897.8C2062.9 896.8 2065.3 897.5 2066.4 897.8C2067.7 898.1 2069.9 900.7 2070.4 899.8C2072.3 896.5 2073.7 888.7 2074.4 883.8C2076.1 870.2 2077.3 836.1 2078.3 837.9C2079.7 840.3 2080.2 880.2 2082.3 897.8C2082.6 899.9 2085.5 904.7 2086.3 903.8C2087.9 901.7 2089.0 888.1 2090.2 887.8C2091.3 887.5 2092.9 897.6 2094.2 901.8C2095.3 905.4 2097.3 915.0 2098.2 913.8C2099.7 911.5 2100.7 891.8 2102.1 890.4C2103.1 889.4 2104.6 904.5 2106.1 905.8C2107.0 906.6 2109.2 900.0 2110.1 897.3C2111.6 892.7 2113.1 880.2 2114.0 881.3C2115.5 883.0 2117.2 909.5 2118.0 906.8C2119.6 901.2 2120.0 864.5 2122.0 853.5C2122.3 851.4 2125.1 860.1 2125.9 863.1C2127.5 868.5 2129.0 875.8 2129.9 881.3C2131.4 890.1 2132.2 902.1 2133.9 910.9C2134.6 915.2 2136.9 925.9 2137.8 924.8C2139.3 922.8 2140.6 907.8 2141.8 900.5C2143.0 893.3 2145.0 883.8 2145.8 876.5C2147.4 861.7 2148.4 841.7 2149.7 826.8C2150.8 815.0 2151.6 796.6 2153.7 787.6C2154.0 786.2 2157.3 790.4 2157.7 792.2C2159.7 801.6 2159.9 815.1 2161.6 824.7C2162.3 828.2 2164.8 832.4 2165.6 835.9C2167.2 843.5 2167.5 854.5 2169.6 861.5C2169.9 862.7 2173.4 864.3 2173.5 863.1C2175.8 844.2 2175.3 812.6 2177.5 794.5C2177.7 793.1 2180.9 796.5 2181.4 797.9C2183.3 802.7 2184.6 816.7 2185.4 815.1C2187.0 812.2 2188.5 780.3 2189.4 783.0C2190.9 787.8 2191.2 826.7 2193.3 840.2C2193.6 842.0 2196.9 836.0 2197.3 833.8C2199.3 821.6 2199.9 793.7 2201.3 792.2C2202.3 791.0 2203.9 823.5 2205.2 824.7C2206.3 825.6 2208.2 806.8 2209.2 799.1C2210.5 789.4 2211.7 769.0 2213.2 766.9C2214.1 765.5 2216.2 788.7 2217.1 787.6C2218.5 785.9 2220.3 755.0 2221.1 757.7C2222.6 762.6 2223.6 809.6 2225.1 812.9C2226.0 815.1 2227.8 787.1 2229.0 776.1C2230.2 765.0 2231.0 749.9 2233.0 739.2C2233.3 737.5 2235.9 734.5 2237.0 734.6C2238.2 734.8 2240.3 741.5 2240.9 740.4C2242.7 737.3 2244.1 719.0 2244.9 720.8C2246.5 724.2 2247.7 757.5 2248.9 757.7C2250.0 757.8 2251.9 732.7 2252.8 722.0C2254.3 706.1 2254.6 683.8 2256.8 669.0C2257.0 667.9 2260.6 668.0 2260.8 669.0C2262.9 679.7 2262.8 696.7 2264.7 708.2C2265.1 710.5 2268.3 716.6 2268.7 715.1C2270.6 708.3 2270.9 685.7 2272.7 680.6C2273.3 678.8 2275.9 688.5 2276.6 692.1C2278.3 699.7 2278.8 710.4 2280.6 718.0C2281.2 720.7 2283.4 726.4 2284.6 726.3C2285.8 726.2 2287.6 720.1 2288.5 717.3C2290.0 713.2 2290.8 705.0 2292.5 703.1C2293.2 702.3 2296.3 710.1 2296.5 708.4C2298.7 685.6 2299.4 616.9 2300.4 621.5C2301.8 627.9 2302.6 725.9 2304.4 745.0C2305.0 751.1 2307.0 717.4 2308.4 705.6C2309.4 696.9 2311.4 685.3 2312.3 676.5C2313.8 663.4 2314.3 642.0 2316.3 632.8C2316.7 631.0 2319.5 637.7 2320.3 640.1C2321.9 645.1 2322.4 654.6 2324.2 657.5C2324.8 658.5 2327.0 654.5 2328.2 653.2C2329.4 651.9 2332.0 647.2 2332.2 648.8C2334.4 669.1 2335.0 727.8 2336.1 726.0C2337.4 723.9 2337.9 662.4 2340.1 635.7C2340.3 633.6 2343.7 628.3 2344.1 629.9C2346.1 639.6 2346.8 660.5 2348.0 673.6C2349.2 686.7 2351.0 704.2 2352.0 717.3C2353.4 736.9 2354.9 785.4 2356.0 782.9C2357.3 779.7 2358.4 723.7 2359.9 698.3C2360.8 684.3 2362.8 665.7 2363.9 651.7C2365.2 635.1 2367.0 613.0 2367.9 596.3C2369.3 568.4 2370.4 508.9 2371.8 503.1C2372.8 499.3 2374.9 545.9 2375.8 564.3C2377.2 593.6 2378.4 632.6 2379.7 661.9C2380.8 685.5 2383.0 750.6 2383.7 740.6C2385.4 716.0 2385.9 604.9 2387.7 546.8C2388.3 526.2 2389.9 487.9 2391.6 478.3C2392.3 474.8 2394.9 506.2 2395.6 503.1C2397.3 495.3 2397.9 449.6 2399.6 441.9C2400.3 438.7 2402.6 459.2 2403.5 466.6C2405.0 477.5 2406.6 492.1 2407.5 503.1C2409.0 522.3 2409.4 548.2 2411.5 567.2C2411.8 570.0 2414.9 573.1 2415.4 575.9C2417.2 584.5 2419.3 596.3 2419.4 605.1C2421.7 751.6 2421.0 948.4 2423.4 1093.8C2423.4 1093.8 2426.2 1093.8 2427.3 1093.8" stroke="#28a745" stroke-width="4.5" fill="none" stroke-linejoin="round"/><g fill="rgba(40,167,69,0.3)" stroke="#28a745" stroke-width="2"><circle cx="484.0" cy="1093.8" r="4.6"/><circle cx="488.0" cy="1093.8" r="4.6"/><circle cx="491.9" cy="1056.6" r="4.6"/><circle cx="495.9" cy="1057.5" r="4.6"/><circle cx="499.9" cy="1050.8" r="4.6"/><circle cx="503.8" cy="1057.5" r="4.6"/><circle cx="507.8" cy="1058.5" r="4.6"/><circle cx="511.8" cy="1050.8" r="4.6"/><circle cx="515.7" cy="1053.2" r="4.6"/><circle cx="519.7" cy="1055.6" r="4.6"/><circle cx="523.7" cy="1056.6" r="4.6"/><circle cx="527.6" cy="1052.2" r="4.6"/><circle cx="531.6" cy="1057.5" r="4.6"/><circle cx="535.6" cy="1055.6" r="4.6"/><circle cx="539.5" cy="1050.3" r="4.6"/><circle cx="543.5" cy="1055.6" r="4.6"/><circle cx="547.5" cy="1057.5" r="4.6"/><circle cx="551.4" cy="1056.6" r="4.6"/><circle cx="555.4" cy="1047.9" r="4.6"/><circle cx="559.4" cy="1057.5" r="4.6"/><circle cx="563.3" cy="1057.5" r="4.6"/><circle cx="567.3" cy="1054.6" r="4.6"/><circle cx="571.3" cy="1053.7" r="4.6"/><circle cx="575.2" cy="1047.4" r="4.6"/><circle cx="579.2" cy="1062.3" r="4.6"/><circle cx="583.1" cy="1055.6" r="4.6"/><circle cx="587.1" cy="1058.5" r="4.6"/><circle cx="591.1" cy="1060.4" r="4.6"/><circle cx="595.0" cy="1072.8" r="4.6"/><circle cx="599.0" cy="1053.7" r="4.6"/><circle cx="603.0" cy="1047.0" r="4.6"/><circle cx="606.9" cy="1053.7" r="4.6"/><circle cx="610.9" cy="1051.8" r="4.6"/><circle cx="614.9" cy="1055.6" r="4.6"/><circle cx="618.8" cy="1061.3" r="4.6"/><circle cx="622.8" cy="1061.3" r="4.6"/><circle cx="626.8" cy="1051.8" r="4.6"/><circle cx="630.7" cy="1034.0" r="4.6"/><circle cx="634.7" cy="1045.0" r="4.6"/><circle cx="638.7" cy="1057.5" r="4.6"/><circle cx="642.6" cy="1040.3" r="4.6"/><circle cx="646.6" cy="1047.9" r="4.6"/><circle cx="650.6" cy="1048.9" r="4.6"/><circle cx="654.5" cy="1036.4" r="4.6"/><circle cx="658.5" cy="1025.9" r="4.6"/><circle cx="662.5" cy="1045.0" r="4.6"/><circle cx="666.4" cy="1048.9" r="4.6"/><circle cx="670.4" cy="1050.8" r="4.6"/><circle cx="674.4" cy="1043.1" r="4.6"/><circle cx="678.3" cy="1041.2" r="4.6"/><circle cx="682.3" cy="1040.3" r="4.6"/><circle cx="686.3" cy="1042.2" r="4.6"/><circle cx="690.2" cy="1040.3" r="4.6"/><circle cx="694.2" cy="1045.0" r="4.6"/><circle cx="698.2" cy="1038.3" r="4.6"/><circle cx="702.1" cy="1033.5" r="4.6"/><circle cx="706.1" cy="1036.4" r="4.6"/><circle cx="710.1" cy="1035.5" r="4.6"/><circle cx="714.0" cy="1027.8" r="4.6"/><circle cx="718.0" cy="1023.0" r="4.6"/><circle cx="722.0" cy="1025.5" r="4.6"/><circle cx="725.9" cy="1036.0" r="4.6"/><circle cx="729.9" cy="1063.8" r="4.6"/><circle cx="733.9" cy="1052.8" r="4.6"/><circle cx="737.8" cy="1041.8" r="4.6"/><circle cx="741.8" cy="1046.6" r="4.6"/><circle cx="745.8" cy="1049.4" r="4.6"/><circle cx="749.7" cy="1044.6" r="4.6"/><circle cx="753.7" cy="1039.8" r="4.6"/><circle cx="757.7" cy="1060.9" r="4.6"/><circle cx="761.6" cy="1039.8" r="4.6"/><circle cx="765.6" cy="1041.8" r="4.6"/><circle cx="769.6" cy="1043.7" r="4.6"/><circle cx="773.5" cy="1047.5" r="4.6"/><circle cx="777.5" cy="1043.7" r="4.6"/><circle cx="781.5" cy="1039.8" r="4.6"/><circle cx="785.4" cy="1053.3" r="4.6"/><circle cx="789.4" cy="1033.1" r="4.6"/><circle cx="793.3" cy="1030.7" r="4.6"/><circle cx="797.3" cy="1028.3" r="4.6"/><circle cx="801.3" cy="1037.0" r="4.6"/><circle cx="805.2" cy="1034.6" r="4.6"/><circle cx="809.2" cy="1032.2" r="4.6"/><circle cx="813.2" cy="1041.8" r="4.6"/><circle cx="817.1" cy="1055.2" r="4.6"/><circle cx="821.1" cy="1037.9" r="4.6"/><circle cx="825.1" cy="1039.8" r="4.6"/><circle cx="829.0" cy="1039.4" r="4.6"/><circle cx="833.0" cy="1038.9" r="4.6"/><circle cx="837.0" cy="1042.7" r="4.6"/><circle cx="840.9" cy="1044.6" r="4.6"/><circle cx="844.9" cy="1055.2" r="4.6"/><circle cx="848.9" cy="1045.6" r="4.6"/><circle cx="852.8" cy="1036.0" r="4.6"/><circle cx="856.8" cy="1045.6" r="4.6"/><circle cx="860.8" cy="1044.6" r="4.6"/><circle cx="864.7" cy="1057.1" r="4.6"/><circle cx="868.7" cy="1029.3" r="4.6"/><circle cx="872.7" cy="1037.9" r="4.6"/><circle cx="876.6" cy="1043.7" r="4.6"/><circle cx="880.6" cy="1036.0" r="4.6"/><circle cx="884.6" cy="1037.0" r="4.6"/><circle cx="888.5" cy="1037.9" r="4.6"/><circle cx="892.5" cy="1039.8" r="4.6"/><circle cx="896.5" cy="1047.5" r="4.6"/><circle cx="900.4" cy="1053.3" r="4.6"/><circle cx="904.4" cy="1059.0" r="4.6"/><circle cx="908.4" cy="1060.9" r="4.6"/><circle cx="912.3" cy="1053.7" r="4.6"/><circle cx="916.3" cy="1046.6" r="4.6"/><circle cx="920.3" cy="1038.4" r="4.6"/><circle cx="924.2" cy="1030.3" r="4.6"/><circle cx="928.2" cy="1036.0" r="4.6"/><circle cx="932.2" cy="1054.2" r="4.6"/><circle cx="936.1" cy="1072.4" r="4.6"/><circle cx="940.1" cy="1044.6" r="4.6"/><circle cx="944.1" cy="1045.6" r="4.6"/><circle cx="948.0" cy="1038.4" r="4.6"/><circle cx="952.0" cy="1049.4" r="4.6"/><circle cx="956.0" cy="1057.1" r="4.6"/><circle cx="959.9" cy="1024.5" r="4.6"/><circle cx="963.9" cy="1047.5" r="4.6"/><circle cx="967.9" cy="1047.5" r="4.6"/><circle cx="971.8" cy="1057.1" r="4.6"/><circle cx="975.8" cy="1047.5" r="4.6"/><circle cx="979.8" cy="1037.9" r="4.6"/><circle cx="983.7" cy="1043.7" r="4.6"/><circle cx="987.7" cy="1039.8" r="4.6"/><circle cx="991.6" cy="1043.7" r="4.6"/><circle cx="995.6" cy="1041.8" r="4.6"/><circle cx="999.6" cy="1044.6" r="4.6"/><circle cx="1003.5" cy="1040.8" r="4.6"/><circle cx="1007.5" cy="1050.4" r="4.6"/><circle cx="1011.5" cy="1057.1" r="4.6"/><circle cx="1015.4" cy="1047.5" r="4.6"/><circle cx="1019.4" cy="1036.0" r="4.6"/><circle cx="1023.4" cy="1041.8" r="4.6"/><circle cx="1027.3" cy="1047.5" r="4.6"/><circle cx="1031.3" cy="1047.5" r="4.6"/><circle cx="1035.3" cy="1039.8" r="4.6"/><circle cx="1039.2" cy="1038.9" r="4.6"/><circle cx="1043.2" cy="1043.7" r="4.6"/><circle cx="1047.2" cy="1037.9" r="4.6"/><circle cx="1051.1" cy="1038.9" r="4.6"/><circle cx="1055.1" cy="1050.4" r="4.6"/><circle cx="1059.1" cy="1036.0" r="4.6"/><circle cx="1063.0" cy="1043.7" r="4.6"/><circle cx="1067.0" cy="1043.7" r="4.6"/><circle cx="1071.0" cy="1039.8" r="4.6"/><circle cx="1074.9" cy="1042.7" r="4.6"/><circle cx="1078.9" cy="1047.5" r="4.6"/><circle cx="1082.9" cy="1037.9" r="4.6"/><circle cx="1086.8" cy="1043.7" r="4.6"/><circle cx="1090.8" cy="1049.4" r="4.6"/><circle cx="1094.8" cy="1028.3" r="4.6"/><circle cx="1098.7" cy="1036.0" r="4.6"/><circle cx="1102.7" cy="1028.3" r="4.6"/><circle cx="1106.7" cy="1031.2" r="4.6"/><circle cx="1110.6" cy="1047.5" r="4.6"/><circle cx="1114.6" cy="1039.8" r="4.6"/><circle cx="1118.6" cy="1055.2" r="4.6"/><circle cx="1122.5" cy="1047.5" r="4.6"/><circle cx="1126.5" cy="1043.7" r="4.6"/><circle cx="1130.5" cy="1037.9" r="4.6"/><circle cx="1134.4" cy="1025.5" r="4.6"/><circle cx="1138.4" cy="1051.3" r="4.6"/><circle cx="1142.4" cy="1043.7" r="4.6"/><circle cx="1146.3" cy="1041.8" r="4.6"/><circle cx="1150.3" cy="1037.9" r="4.6"/><circle cx="1154.3" cy="1043.7" r="4.6"/><circle cx="1158.2" cy="1034.1" r="4.6"/><circle cx="1162.2" cy="1039.8" r="4.6"/><circle cx="1166.2" cy="1047.5" r="4.6"/><circle cx="1170.1" cy="1037.9" r="4.6"/><circle cx="1174.1" cy="1043.7" r="4.6"/><circle cx="1178.1" cy="1010.9" r="4.6"/><circle cx="1182.0" cy="1026.7" r="4.6"/><circle cx="1186.0" cy="1033.7" r="4.6"/><circle cx="1189.9" cy="1027.9" r="4.6"/><circle cx="1193.9" cy="1031.8" r="4.6"/><circle cx="1197.9" cy="1032.7" r="4.6"/><circle cx="1201.8" cy="1035.6" r="4.6"/><circle cx="1205.8" cy="1039.4" r="4.6"/><circle cx="1209.8" cy="1036.6" r="4.6"/><circle cx="1213.7" cy="1016.4" r="4.6"/><circle cx="1217.7" cy="1020.3" r="4.6"/><circle cx="1221.7" cy="1031.8" r="4.6"/><circle cx="1225.6" cy="1032.7" r="4.6"/><circle cx="1229.6" cy="1008.8" r="4.6"/><circle cx="1233.6" cy="1018.3" r="4.6"/><circle cx="1237.5" cy="1022.2" r="4.6"/><circle cx="1241.5" cy="1036.6" r="4.6"/><circle cx="1245.5" cy="1024.1" r="4.6"/><circle cx="1249.4" cy="1025.0" r="4.6"/><circle cx="1253.4" cy="1024.1" r="4.6"/><circle cx="1257.4" cy="1034.6" r="4.6"/><circle cx="1261.3" cy="1013.5" r="4.6"/><circle cx="1265.3" cy="1025.0" r="4.6"/><circle cx="1269.3" cy="1022.2" r="4.6"/><circle cx="1273.2" cy="1025.0" r="4.6"/><circle cx="1277.2" cy="1035.6" r="4.6"/><circle cx="1281.2" cy="1024.1" r="4.6"/><circle cx="1285.1" cy="1020.3" r="4.6"/><circle cx="1289.1" cy="1024.1" r="4.6"/><circle cx="1293.1" cy="1004.0" r="4.6"/><circle cx="1297.0" cy="1025.0" r="4.6"/><circle cx="1301.0" cy="1024.1" r="4.6"/><circle cx="1305.0" cy="1029.8" r="4.6"/><circle cx="1308.9" cy="1037.5" r="4.6"/><circle cx="1312.9" cy="1047.1" r="4.6"/><circle cx="1316.9" cy="1027.9" r="4.6"/><circle cx="1320.8" cy="1024.1" r="4.6"/><circle cx="1324.8" cy="1043.3" r="4.6"/><circle cx="1328.8" cy="1041.3" r="4.6"/><circle cx="1332.7" cy="1037.5" r="4.6"/><circle cx="1336.7" cy="1027.9" r="4.6"/><circle cx="1340.7" cy="1026.0" r="4.6"/><circle cx="1344.6" cy="1027.0" r="4.6"/><circle cx="1348.6" cy="1018.3" r="4.6"/><circle cx="1352.6" cy="1035.6" r="4.6"/><circle cx="1356.5" cy="1046.1" r="4.6"/><circle cx="1360.5" cy="1052.8" r="4.6"/><circle cx="1364.5" cy="1049.0" r="4.6"/><circle cx="1368.4" cy="1056.7" r="4.6"/><circle cx="1372.4" cy="1056.7" r="4.6"/><circle cx="1376.3" cy="1056.7" r="4.6"/><circle cx="1380.3" cy="1037.5" r="4.6"/><circle cx="1384.3" cy="1047.1" r="4.6"/><circle cx="1388.2" cy="1025.0" r="4.6"/><circle cx="1392.2" cy="1037.5" r="4.6"/><circle cx="1396.2" cy="1045.2" r="4.6"/><circle cx="1400.1" cy="1041.3" r="4.6"/><circle cx="1404.1" cy="1039.4" r="4.6"/><circle cx="1408.1" cy="1042.3" r="4.6"/><circle cx="1412.0" cy="1042.8" r="4.6"/><circle cx="1416.0" cy="1049.0" r="4.6"/><circle cx="1420.0" cy="1037.5" r="4.6"/><circle cx="1423.9" cy="1036.6" r="4.6"/><circle cx="1427.9" cy="1047.1" r="4.6"/><circle cx="1431.9" cy="1033.7" r="4.6"/><circle cx="1435.8" cy="1027.9" r="4.6"/><circle cx="1439.8" cy="1035.6" r="4.6"/><circle cx="1443.8" cy="1011.6" r="4.6"/><circle cx="1447.7" cy="1021.2" r="4.6"/><circle cx="1451.7" cy="1021.2" r="4.6"/><circle cx="1455.7" cy="1006.8" r="4.6"/><circle cx="1459.6" cy="1006.8" r="4.6"/><circle cx="1463.6" cy="1031.8" r="4.6"/><circle cx="1467.6" cy="1021.2" r="4.6"/><circle cx="1471.5" cy="1006.8" r="4.6"/><circle cx="1475.5" cy="1023.1" r="4.6"/><circle cx="1479.5" cy="1025.0" r="4.6"/><circle cx="1483.4" cy="1041.3" r="4.6"/><circle cx="1487.4" cy="1032.7" r="4.6"/><circle cx="1491.4" cy="1036.6" r="4.6"/><circle cx="1495.3" cy="1028.9" r="4.6"/><circle cx="1499.3" cy="1034.6" r="4.6"/><circle cx="1503.3" cy="1022.2" r="4.6"/><circle cx="1507.2" cy="1035.6" r="4.6"/><circle cx="1511.2" cy="1033.7" r="4.6"/><circle cx="1515.2" cy="1024.1" r="4.6"/><circle cx="1519.1" cy="1022.2" r="4.6"/><circle cx="1523.1" cy="1025.0" r="4.6"/><circle cx="1527.1" cy="1023.1" r="4.6"/><circle cx="1531.0" cy="1020.3" r="4.6"/><circle cx="1535.0" cy="1030.8" r="4.6"/><circle cx="1539.0" cy="1047.1" r="4.6"/><circle cx="1542.9" cy="1018.3" r="4.6"/><circle cx="1546.9" cy="1035.6" r="4.6"/><circle cx="1550.9" cy="1037.5" r="4.6"/><circle cx="1554.8" cy="1047.1" r="4.6"/><circle cx="1558.8" cy="1039.4" r="4.6"/><circle cx="1562.8" cy="1045.2" r="4.6"/><circle cx="1566.7" cy="1047.1" r="4.6"/><circle cx="1570.7" cy="1039.4" r="4.6"/><circle cx="1574.7" cy="1037.5" r="4.6"/><circle cx="1578.6" cy="1050.9" r="4.6"/><circle cx="1582.6" cy="1018.3" r="4.6"/><circle cx="1586.5" cy="1020.3" r="4.6"/><circle cx="1590.5" cy="1043.3" r="4.6"/><circle cx="1594.5" cy="1022.2" r="4.6"/><circle cx="1598.4" cy="1020.3" r="4.6"/><circle cx="1602.4" cy="1022.2" r="4.6"/><circle cx="1606.4" cy="1031.8" r="4.6"/><circle cx="1610.3" cy="1030.8" r="4.6"/><circle cx="1614.3" cy="1022.2" r="4.6"/><circle cx="1618.3" cy="1024.1" r="4.6"/><circle cx="1622.2" cy="1012.6" r="4.6"/><circle cx="1626.2" cy="1025.0" r="4.6"/><circle cx="1630.2" cy="1005.9" r="4.6"/><circle cx="1634.1" cy="1003.0" r="4.6"/><circle cx="1638.1" cy="1009.7" r="4.6"/><circle cx="1642.1" cy="1007.2" r="4.6"/><circle cx="1646.0" cy="1003.8" r="4.6"/><circle cx="1650.0" cy="1020.9" r="4.6"/><circle cx="1654.0" cy="999.4" r="4.6"/><circle cx="1657.9" cy="977.8" r="4.6"/><circle cx="1661.9" cy="999.8" r="4.6"/><circle cx="1665.9" cy="965.3" r="4.6"/><circle cx="1669.8" cy="986.4" r="4.6"/><circle cx="1673.8" cy="1005.6" r="4.6"/><circle cx="1677.8" cy="988.3" r="4.6"/><circle cx="1681.7" cy="1002.7" r="4.6"/><circle cx="1685.7" cy="991.2" r="4.6"/><circle cx="1689.7" cy="996.0" r="4.6"/><circle cx="1693.6" cy="986.4" r="4.6"/><circle cx="1697.6" cy="986.4" r="4.6"/><circle cx="1701.6" cy="965.3" r="4.6"/><circle cx="1705.5" cy="1002.7" r="4.6"/><circle cx="1709.5" cy="988.3" r="4.6"/><circle cx="1713.5" cy="978.8" r="4.6"/><circle cx="1717.4" cy="989.3" r="4.6"/><circle cx="1721.4" cy="999.8" r="4.6"/><circle cx="1725.4" cy="999.8" r="4.6"/><circle cx="1729.3" cy="992.2" r="4.6"/><circle cx="1733.3" cy="1007.5" r="4.6"/><circle cx="1737.3" cy="989.3" r="4.6"/><circle cx="1741.2" cy="997.9" r="4.6"/><circle cx="1745.2" cy="1009.4" r="4.6"/><circle cx="1749.2" cy="994.1" r="4.6"/><circle cx="1753.1" cy="991.2" r="4.6"/><circle cx="1757.1" cy="1004.6" r="4.6"/><circle cx="1761.1" cy="1007.5" r="4.6"/><circle cx="1765.0" cy="972.0" r="4.6"/><circle cx="1769.0" cy="990.3" r="4.6"/><circle cx="1773.0" cy="997.0" r="4.6"/><circle cx="1776.9" cy="993.1" r="4.6"/><circle cx="1780.9" cy="995.0" r="4.6"/><circle cx="1784.8" cy="998.9" r="4.6"/><circle cx="1788.8" cy="979.7" r="4.6"/><circle cx="1792.8" cy="982.6" r="4.6"/><circle cx="1796.7" cy="974.9" r="4.6"/><circle cx="1800.7" cy="969.2" r="4.6"/><circle cx="1804.7" cy="997.9" r="4.6"/><circle cx="1808.6" cy="975.9" r="4.6"/><circle cx="1812.6" cy="961.5" r="4.6"/><circle cx="1816.6" cy="1007.5" r="4.6"/><circle cx="1820.5" cy="996.0" r="4.6"/><circle cx="1824.5" cy="1000.8" r="4.6"/><circle cx="1828.5" cy="993.1" r="4.6"/><circle cx="1832.4" cy="1000.8" r="4.6"/><circle cx="1836.4" cy="974.9" r="4.6"/><circle cx="1840.4" cy="988.3" r="4.6"/><circle cx="1844.3" cy="1002.7" r="4.6"/><circle cx="1848.3" cy="991.2" r="4.6"/><circle cx="1852.3" cy="972.0" r="4.6"/><circle cx="1856.2" cy="974.9" r="4.6"/><circle cx="1860.2" cy="988.3" r="4.6"/><circle cx="1864.2" cy="966.3" r="4.6"/><circle cx="1868.1" cy="977.8" r="4.6"/><circle cx="1872.1" cy="963.4" r="4.6"/><circle cx="1876.1" cy="949.1" r="4.6"/><circle cx="1880.0" cy="975.1" r="4.6"/><circle cx="1884.0" cy="950.5" r="4.6"/><circle cx="1888.0" cy="940.8" r="4.6"/><circle cx="1891.9" cy="911.1" r="4.6"/><circle cx="1895.9" cy="924.9" r="4.6"/><circle cx="1899.9" cy="902.1" r="4.6"/><circle cx="1903.8" cy="913.2" r="4.6"/><circle cx="1907.8" cy="913.2" r="4.6"/><circle cx="1911.8" cy="914.5" r="4.6"/><circle cx="1915.7" cy="936.0" r="4.6"/><circle cx="1919.7" cy="911.1" r="4.6"/><circle cx="1923.7" cy="921.5" r="4.6"/><circle cx="1927.6" cy="911.1" r="4.6"/><circle cx="1931.6" cy="927.0" r="4.6"/><circle cx="1935.6" cy="940.8" r="4.6"/><circle cx="1939.5" cy="958.8" r="4.6"/><circle cx="1943.5" cy="954.6" r="4.6"/><circle cx="1947.5" cy="942.9" r="4.6"/><circle cx="1951.4" cy="951.8" r="4.6"/><circle cx="1955.4" cy="911.1" r="4.6"/><circle cx="1959.4" cy="921.5" r="4.6"/><circle cx="1963.3" cy="931.1" r="4.6"/><circle cx="1967.3" cy="927.0" r="4.6"/><circle cx="1971.2" cy="951.8" r="4.6"/><circle cx="1975.2" cy="954.6" r="4.6"/><circle cx="1979.2" cy="968.4" r="4.6"/><circle cx="1983.1" cy="947.7" r="4.6"/><circle cx="1987.1" cy="931.8" r="4.6"/><circle cx="1991.1" cy="938.0" r="4.6"/><circle cx="1995.0" cy="915.2" r="4.6"/><circle cx="1999.0" cy="944.9" r="4.6"/><circle cx="2003.0" cy="956.0" r="4.6"/><circle cx="2006.9" cy="947.7" r="4.6"/><circle cx="2010.9" cy="959.4" r="4.6"/><circle cx="2014.9" cy="927.0" r="4.6"/><circle cx="2018.8" cy="920.1" r="4.6"/><circle cx="2022.8" cy="931.8" r="4.6"/><circle cx="2026.8" cy="951.8" r="4.6"/><circle cx="2030.7" cy="965.7" r="4.6"/><circle cx="2034.7" cy="936.6" r="4.6"/><circle cx="2038.7" cy="949.8" r="4.6"/><circle cx="2042.6" cy="931.4" r="4.6"/><circle cx="2046.6" cy="961.6" r="4.6"/><circle cx="2050.6" cy="933.8" r="4.6"/><circle cx="2054.5" cy="913.5" r="4.6"/><circle cx="2058.5" cy="917.9" r="4.6"/><circle cx="2062.5" cy="897.8" r="4.6"/><circle cx="2066.4" cy="897.8" r="4.6"/><circle cx="2070.4" cy="899.8" r="4.6"/><circle cx="2074.4" cy="883.8" r="4.6"/><circle cx="2078.3" cy="837.9" r="4.6"/><circle cx="2082.3" cy="897.8" r="4.6"/><circle cx="2086.3" cy="903.8" r="4.6"/><circle cx="2090.2" cy="887.8" r="4.6"/><circle cx="2094.2" cy="901.8" r="4.6"/><circle cx="2098.2" cy="913.8" r="4.6"/><circle cx="2102.1" cy="890.4" r="4.6"/><circle cx="2106.1" cy="905.8" r="4.6"/><circle cx="2110.1" cy="897.3" r="4.6"/><circle cx="2114.0" cy="881.3" r="4.6"/><circle cx="2118.0" cy="906.8" r="4.6"/><circle cx="2122.0" cy="853.5" r="4.6"/><circle cx="2125.9" cy="863.1" r="4.6"/><circle cx="2129.9" cy="881.3" r="4.6"/><circle cx="2133.9" cy="910.9" r="4.6"/><circle cx="2137.8" cy="924.8" r="4.6"/><circle cx="2141.8" cy="900.5" r="4.6"/><circle cx="2145.8" cy="876.5" r="4.6"/><circle cx="2149.7" cy="826.8" r="4.6"/><circle cx="2153.7" cy="787.6" r="4.6"/><circle cx="2157.7" cy="792.2" r="4.6"/><circle cx="2161.6" cy="824.7" r="4.6"/><circle cx="2165.6" cy="835.9" r="4.6"/><circle cx="2169.6" cy="861.5" r="4.6"/><circle cx="2173.5" cy="863.1" r="4.6"/><circle cx="2177.5" cy="794.5" r="4.6"/><circle cx="2181.4" cy="797.9" r="4.6"/><circle cx="2185.4" cy="815.1" r="4.6"/><circle cx="2189.4" cy="783.0" r="4.6"/><circle cx="2193.3" cy="840.2" r="4.6"/><circle cx="2197.3" cy="833.8" r="4.6"/><circle cx="2201.3" cy="792.2" r="4.6"/><circle cx="2205.2" cy="824.7" r="4.6"/><circle cx="2209.2" cy="799.1" r="4.6"/><circle cx="2213.2" cy="766.9" r="4.6"/><circle cx="2217.1" cy="787.6" r="4.6"/><circle cx="2221.1" cy="757.7" r="4.6"/><circle cx="2225.1" cy="812.9" r="4.6"/><circle cx="2229.0" cy="776.1" r="4.6"/><circle cx="2233.0" cy="739.2" r="4.6"/><circle cx="2237.0" cy="734.6" r="4.6"/><circle cx="2240.9" cy="740.4" r="4.6"/><circle cx="2244.9" cy="720.8" r="4.6"/><circle cx="2248.9" cy="757.7" r="4.6"/><circle cx="2252.8" cy="722.0" r="4.6"/><circle cx="2256.8" cy="669.0" r="4.6"/><circle cx="2260.8" cy="669.0" r="4.6"/><circle cx="2264.7" cy="708.2" r="4.6"/><circle cx="2268.7" cy="715.1" r="4.6"/><circle cx="2272.7" cy="680.6" r="4.6"/><circle cx="2276.6" cy="692.1" r="4.6"/><circle cx="2280.6" cy="718.0" r="4.6"/><circle cx="2284.6" cy="726.3" r="4.6"/><circle cx="2288.5" cy="717.3" r="4.6"/><circle cx="2292.5" cy="703.1" r="4.6"/><circle cx="2296.5" cy="708.4" r="4.6"/><circle cx="2300.4" cy="621.5" r="4.6"/><circle cx="2304.4" cy="745.0" r="4.6"/><circle cx="2308.4" cy="705.6" r="4.6"/><circle cx="2312.3" cy="676.5" r="4.6"/><circle cx="2316.3" cy="632.8" r="4.6"/><circle cx="2320.3" cy="640.1" r="4.6"/><circle cx="2324.2" cy="657.5" r="4.6"/><circle cx="2328.2" cy="653.2" r="4.6"/><circle cx="2332.2" cy="648.8" r="4.6"/><circle cx="2336.1" cy="726.0" r="4.6"/><circle cx="2340.1" cy="635.7" r="4.6"/><circle cx="2344.1" cy="629.9" r="4.6"/><circle cx="2348.0" cy="673.6" r="4.6"/><circle cx="2352.0" cy="717.3" r="4.6"/><circle cx="2356.0" cy="782.9" r="4.6"/><circle cx="2359.9" cy="698.3" r="4.6"/><circle cx="2363.9" cy="651.7" r="4.6"/><circle cx="2367.9" cy="596.3" r="4.6"/><circle cx="2371.8" cy="503.1" r="4.6"/><circle cx="2375.8" cy="564.3" r="4.6"/><circle cx="2379.7" cy="661.9" r="4.6"/><circle cx="2383.7" cy="740.6" r="4.6"/><circle cx="2387.7" cy="546.8" r="4.6"/><circle cx="2391.6" cy="478.3" r="4.6"/><circle cx="2395.6" cy="503.1" r="4.6"/><circle cx="2399.6" cy="441.9" r="4.6"/><circle cx="2403.5" cy="466.6" r="4.6"/><circle cx="2407.5" cy="503.1" r="4.6"/><circle cx="2411.5" cy="567.2" r="4.6"/><circle cx="2415.4" cy="575.9" r="4.6"/><circle cx="2419.4" cy="605.1" r="4.6"/><circle cx="2423.4" cy="1093.8" r="4.6"/><circle cx="2427.3" cy="1093.8" r="4.6"/></g><path d="M484.0 1093.8C485.2 1093.8 487.7 1093.8 488.0 1093.8C490.1 1085.8 490.0 1069.8 491.9 1063.7C492.4 1062.4 495.1 1069.7 495.9 1069.0C497.4 1067.8 498.4 1058.6 499.9 1057.5C500.7 1056.9 502.6 1061.5 503.8 1063.3C505.0 1065.0 506.3 1067.9 507.8 1069.0C508.7 1069.6 510.7 1069.4 511.8 1069.0C513.1 1068.4 514.5 1066.7 515.7 1065.7C516.9 1064.7 518.7 1061.9 519.7 1062.3C521.1 1062.9 522.3 1068.7 523.7 1069.0C524.7 1069.3 526.4 1064.2 527.6 1064.2C528.8 1064.2 530.7 1069.6 531.6 1069.0C533.1 1067.9 534.3 1058.8 535.6 1058.5C536.6 1058.2 537.9 1065.5 539.5 1067.1C540.2 1067.8 542.5 1066.7 543.5 1066.1C544.9 1065.3 546.5 1061.9 547.5 1062.3C548.8 1062.8 550.5 1069.7 551.4 1069.0C552.9 1067.9 554.0 1057.2 555.4 1056.6C556.4 1056.1 557.8 1062.8 559.4 1065.2C560.2 1066.6 562.3 1069.4 563.3 1069.0C564.7 1068.5 566.0 1062.6 567.3 1062.3C568.3 1062.0 569.9 1066.6 571.3 1067.1C572.2 1067.5 574.4 1064.6 575.2 1065.2C576.8 1066.4 578.3 1074.1 579.2 1073.3C580.7 1072.1 581.5 1060.6 583.1 1058.5C583.8 1057.6 585.9 1061.9 587.1 1063.3C588.2 1064.5 590.1 1065.8 591.1 1067.1C592.5 1068.9 594.2 1074.6 595.0 1073.8C596.6 1072.3 597.5 1063.6 599.0 1059.4C599.9 1057.0 602.2 1050.9 603.0 1051.8C604.6 1053.5 605.6 1067.2 606.9 1068.1C607.9 1068.7 609.3 1057.9 610.9 1056.6C611.7 1055.9 613.9 1059.8 614.9 1061.3C616.3 1063.5 617.2 1067.4 618.8 1069.0C619.6 1069.7 622.3 1069.9 622.8 1069.0C624.6 1066.1 625.4 1060.2 626.8 1056.6C627.8 1053.6 629.6 1046.8 630.7 1047.0C632.0 1047.1 633.5 1054.4 634.7 1057.5C635.8 1060.4 637.7 1067.6 638.7 1067.1C640.0 1066.4 640.9 1055.7 642.6 1053.7C643.3 1052.9 645.9 1056.1 646.6 1057.5C648.2 1060.7 649.4 1069.0 650.6 1069.0C651.8 1069.0 653.2 1060.9 654.5 1057.5C655.6 1054.9 657.3 1048.9 658.5 1048.9C659.7 1048.9 661.1 1055.0 662.5 1057.5C663.5 1059.3 665.1 1062.9 666.4 1063.3C667.5 1063.5 669.6 1058.8 670.4 1059.4C672.0 1060.6 673.2 1069.0 674.4 1069.0C675.6 1069.0 676.8 1062.1 678.3 1059.4C679.2 1058.0 681.1 1055.6 682.3 1055.6C683.5 1055.6 685.2 1059.7 686.3 1059.4C687.6 1059.1 689.6 1052.7 690.2 1053.7C691.9 1056.2 693.0 1070.9 694.2 1070.9C695.4 1070.9 696.3 1058.4 698.2 1053.7C698.7 1052.4 701.2 1050.4 702.1 1050.8C703.6 1051.5 705.0 1057.6 706.1 1057.5C707.3 1057.4 708.9 1049.9 710.1 1049.8C711.2 1049.8 713.2 1058.2 714.0 1057.3C715.6 1055.6 716.1 1045.0 718.0 1041.2C718.5 1040.3 721.5 1040.8 722.0 1041.8C723.8 1045.3 724.7 1051.8 725.9 1056.1C727.1 1060.4 728.3 1068.8 729.9 1070.5C730.7 1071.3 732.7 1066.5 733.9 1064.8C735.0 1063.0 736.3 1059.8 737.8 1059.0C738.7 1058.5 740.6 1060.0 741.8 1060.4C743.0 1060.9 744.9 1062.4 745.8 1061.9C747.3 1061.0 748.5 1057.5 749.7 1055.7C750.9 1053.8 753.0 1048.5 753.7 1049.4C755.4 1051.8 755.7 1062.5 757.7 1066.7C758.1 1067.6 760.7 1067.2 761.6 1066.7C763.1 1065.8 764.4 1063.3 765.6 1061.9C766.8 1060.4 768.7 1056.4 769.6 1057.1C771.1 1058.4 772.2 1068.3 773.5 1068.6C774.6 1068.9 776.3 1061.9 777.5 1059.0C778.7 1056.1 780.7 1048.2 781.5 1049.4C783.1 1052.2 783.9 1070.4 785.4 1072.4C786.3 1073.6 788.2 1063.7 789.4 1060.0C790.6 1056.2 791.7 1050.9 793.3 1047.5C794.1 1046.1 796.3 1043.3 797.3 1043.7C798.7 1044.2 800.1 1048.4 801.3 1050.4C802.5 1052.4 804.2 1057.4 805.2 1057.1C806.6 1056.8 808.2 1048.0 809.2 1048.5C810.6 1049.1 811.6 1057.4 813.2 1060.9C814.0 1062.8 816.1 1066.9 817.1 1066.7C818.5 1066.4 819.9 1061.3 821.1 1059.0C822.3 1056.7 824.0 1051.0 825.1 1051.3C826.4 1051.8 827.4 1060.2 829.0 1061.9C829.7 1062.6 831.8 1060.2 833.0 1059.5C834.2 1058.8 835.8 1057.2 837.0 1057.1C838.1 1057.0 840.3 1057.9 840.9 1059.0C842.7 1062.0 843.7 1070.4 844.9 1070.5C846.1 1070.6 847.7 1062.8 848.9 1059.5C850.1 1056.2 851.4 1049.1 852.8 1048.5C853.8 1048.0 855.6 1053.5 856.8 1055.7C858.0 1057.8 859.5 1060.7 860.8 1062.8C861.9 1064.6 864.1 1069.6 864.7 1068.6C866.4 1066.1 866.8 1054.9 868.7 1051.3C869.2 1050.4 871.5 1053.0 872.7 1053.7C873.9 1054.5 875.5 1056.3 876.6 1056.1C877.9 1055.9 879.4 1053.5 880.6 1052.3C881.8 1051.2 883.5 1048.2 884.6 1048.5C885.9 1048.8 887.6 1052.4 888.5 1054.2C890.0 1057.0 890.9 1061.3 892.5 1063.8C893.3 1065.0 895.4 1065.7 896.5 1066.7C897.8 1067.9 899.2 1069.7 900.4 1071.0C901.6 1072.3 903.0 1074.5 904.4 1075.3C905.4 1075.8 907.2 1075.3 908.4 1075.3C909.6 1075.3 911.7 1076.2 912.3 1075.3C914.1 1072.7 914.8 1067.1 916.3 1063.8C917.1 1062.0 919.1 1060.1 920.3 1058.5C921.4 1057.0 922.9 1053.5 924.2 1053.3C925.3 1053.1 927.4 1055.7 928.2 1057.1C929.8 1059.9 931.0 1064.1 932.2 1067.2C933.3 1070.2 935.3 1078.3 936.1 1077.2C937.7 1075.2 938.1 1061.6 940.1 1057.1C940.5 1056.1 942.8 1058.7 944.1 1059.0C945.2 1059.3 947.5 1058.1 948.0 1059.0C949.9 1062.4 950.1 1070.2 952.0 1073.4C952.5 1074.3 955.6 1073.5 956.0 1072.4C958.0 1066.9 958.2 1054.2 959.9 1051.3C960.6 1050.2 962.4 1056.9 963.9 1059.0C964.8 1060.4 966.7 1061.7 967.9 1062.8C969.0 1064.0 971.0 1067.3 971.8 1066.7C973.4 1065.6 974.2 1059.6 975.8 1057.1C976.5 1055.9 978.6 1054.2 979.8 1054.2C980.9 1054.2 982.4 1056.6 983.7 1057.1C984.8 1057.5 986.6 1057.4 987.7 1057.1C988.9 1056.8 990.5 1055.2 991.6 1055.2C992.8 1055.2 994.4 1056.8 995.6 1057.1C996.7 1057.4 998.4 1057.2 999.6 1057.1C1000.8 1056.9 1003.1 1055.3 1003.5 1056.1C1005.4 1059.6 1005.7 1067.2 1007.5 1071.5C1008.1 1073.0 1010.8 1076.1 1011.5 1075.3C1013.2 1073.5 1014.0 1066.5 1015.4 1062.8C1016.4 1060.4 1018.1 1055.5 1019.4 1055.2C1020.5 1054.9 1022.2 1059.2 1023.4 1060.9C1024.6 1062.7 1026.0 1066.4 1027.3 1066.7C1028.4 1066.9 1029.9 1063.3 1031.3 1062.8C1032.3 1062.5 1034.3 1064.2 1035.3 1063.8C1036.6 1063.3 1037.9 1060.9 1039.2 1060.0C1040.3 1059.2 1042.1 1058.8 1043.2 1058.1C1044.5 1057.1 1045.8 1054.5 1047.2 1054.2C1048.2 1054.0 1050.7 1055.0 1051.1 1056.1C1053.1 1061.3 1053.8 1074.5 1055.1 1075.3C1056.1 1075.9 1057.4 1062.7 1059.1 1060.9C1059.8 1060.1 1061.5 1065.4 1063.0 1066.7C1063.9 1067.4 1066.0 1067.0 1067.0 1067.6C1068.4 1068.5 1070.1 1072.1 1071.0 1071.5C1072.5 1070.3 1073.3 1063.3 1074.9 1061.9C1075.7 1061.2 1077.9 1065.0 1078.9 1064.8C1080.2 1064.4 1081.5 1061.3 1082.9 1060.0C1083.9 1059.0 1086.1 1056.4 1086.8 1057.1C1088.4 1058.5 1090.1 1068.0 1090.8 1066.7C1092.5 1063.7 1093.2 1045.0 1094.8 1042.7C1095.6 1041.5 1097.4 1054.5 1098.7 1055.2C1099.7 1055.7 1101.1 1047.7 1102.7 1046.6C1103.5 1046.0 1106.1 1048.1 1106.7 1049.4C1108.5 1053.9 1108.7 1062.3 1110.6 1065.7C1111.1 1066.6 1113.6 1063.4 1114.6 1063.8C1116.0 1064.3 1117.5 1068.9 1118.6 1068.6C1119.9 1068.3 1121.2 1062.2 1122.5 1061.9C1123.6 1061.6 1125.6 1067.2 1126.5 1066.7C1128.0 1065.8 1129.2 1059.9 1130.5 1057.1C1131.6 1054.5 1133.4 1048.0 1134.4 1048.5C1135.8 1049.1 1136.7 1057.5 1138.4 1060.9C1139.1 1062.4 1141.0 1064.4 1142.4 1064.8C1143.4 1065.0 1145.4 1063.7 1146.3 1062.8C1147.8 1061.4 1149.0 1057.2 1150.3 1057.1C1151.4 1057.0 1152.9 1061.4 1154.3 1061.9C1155.2 1062.2 1157.5 1059.3 1158.2 1060.0C1159.8 1061.3 1160.6 1067.2 1162.2 1068.6C1162.9 1069.2 1165.3 1067.6 1166.2 1066.7C1167.7 1065.0 1168.8 1061.9 1170.1 1060.0C1171.2 1058.4 1173.3 1056.9 1174.1 1055.2C1175.7 1051.5 1176.3 1044.2 1178.1 1042.0C1178.7 1041.2 1181.4 1044.0 1182.0 1045.4C1183.8 1049.8 1184.7 1061.2 1186.0 1061.5C1187.1 1061.7 1188.4 1051.2 1189.9 1047.1C1190.8 1044.9 1192.9 1039.9 1193.9 1040.4C1195.3 1041.1 1196.4 1047.9 1197.9 1050.9C1198.8 1052.8 1200.8 1054.9 1201.8 1056.7C1203.2 1058.9 1204.4 1063.8 1205.8 1064.3C1206.8 1064.7 1208.9 1061.2 1209.8 1059.6C1211.3 1056.6 1212.3 1049.9 1213.7 1049.0C1214.7 1048.5 1216.2 1053.7 1217.7 1054.8C1218.6 1055.4 1220.5 1054.8 1221.7 1054.8C1222.9 1054.8 1225.1 1055.6 1225.6 1054.8C1227.5 1051.9 1228.5 1041.9 1229.6 1042.3C1230.9 1042.8 1231.9 1055.4 1233.6 1057.6C1234.2 1058.5 1236.4 1052.8 1237.5 1052.8C1238.7 1052.8 1240.6 1058.1 1241.5 1057.6C1242.9 1056.9 1243.9 1051.3 1245.5 1049.0C1246.3 1047.8 1248.2 1047.0 1249.4 1046.1C1250.6 1045.3 1252.6 1042.6 1253.4 1043.3C1255.0 1044.6 1256.5 1053.7 1257.4 1052.8C1258.9 1051.4 1259.8 1037.0 1261.3 1035.6C1262.2 1034.7 1263.8 1044.3 1265.3 1045.2C1266.2 1045.7 1268.1 1040.2 1269.3 1040.4C1270.5 1040.5 1272.3 1044.3 1273.2 1046.1C1274.7 1049.2 1276.2 1057.2 1277.2 1056.7C1278.6 1056.0 1279.6 1046.5 1281.2 1042.3C1282.0 1040.1 1284.0 1035.5 1285.1 1035.6C1286.4 1035.7 1288.1 1043.6 1289.1 1043.3C1290.4 1042.8 1291.5 1033.8 1293.1 1032.7C1293.9 1032.1 1295.8 1036.1 1297.0 1037.5C1298.2 1038.9 1299.8 1040.9 1301.0 1042.3C1302.2 1043.7 1304.0 1045.5 1305.0 1047.1C1306.3 1049.3 1307.7 1052.5 1308.9 1054.8C1310.1 1056.8 1312.4 1062.9 1312.9 1061.5C1314.8 1055.5 1315.1 1034.8 1316.9 1029.8C1317.4 1028.2 1319.8 1036.5 1320.8 1039.4C1322.2 1043.1 1323.1 1048.4 1324.8 1051.9C1325.5 1053.3 1327.9 1056.2 1328.8 1055.7C1330.3 1054.8 1331.6 1049.7 1332.7 1047.1C1334.0 1044.2 1336.1 1036.0 1336.7 1037.5C1338.4 1041.7 1339.3 1064.9 1340.7 1066.3C1341.7 1067.2 1342.9 1051.3 1344.6 1045.2C1345.3 1042.7 1347.6 1037.0 1348.6 1037.5C1350.0 1038.2 1351.2 1045.6 1352.6 1049.0C1353.6 1051.7 1355.6 1055.0 1356.5 1057.6C1357.9 1061.6 1359.0 1069.8 1360.5 1071.1C1361.3 1071.8 1363.1 1064.7 1364.5 1064.3C1365.5 1064.1 1367.1 1068.8 1368.4 1069.1C1369.5 1069.4 1371.2 1067.1 1372.4 1066.3C1373.6 1065.4 1375.8 1064.7 1376.3 1063.4C1378.1 1059.5 1378.5 1051.6 1380.3 1049.0C1380.9 1048.2 1383.6 1052.6 1384.3 1051.9C1386.0 1050.0 1387.2 1039.8 1388.2 1040.4C1389.6 1041.2 1390.6 1051.9 1392.2 1056.7C1393.0 1059.1 1394.8 1063.8 1396.2 1064.3C1397.2 1064.7 1398.8 1060.1 1400.1 1059.6C1401.1 1059.2 1402.9 1061.4 1404.1 1061.5C1405.3 1061.5 1406.9 1059.9 1408.1 1060.0C1409.3 1060.2 1411.4 1061.3 1412.0 1062.4C1413.7 1065.2 1414.9 1073.1 1416.0 1073.0C1417.2 1072.8 1418.2 1064.4 1420.0 1061.5C1420.6 1060.4 1423.2 1058.9 1423.9 1059.6C1425.6 1060.9 1427.0 1068.9 1427.9 1068.2C1429.4 1066.9 1430.4 1057.4 1431.9 1052.8C1432.8 1049.9 1434.7 1043.3 1435.8 1043.3C1437.0 1043.3 1438.9 1053.7 1439.8 1052.8C1441.3 1051.4 1442.1 1038.1 1443.8 1035.6C1444.4 1034.6 1446.2 1040.2 1447.7 1041.3C1448.6 1042.0 1450.8 1042.0 1451.7 1041.3C1453.2 1040.2 1454.6 1037.4 1455.7 1035.6C1457.0 1033.4 1458.9 1027.0 1459.6 1027.9C1461.2 1029.9 1461.9 1042.7 1463.6 1045.2C1464.3 1046.2 1466.2 1039.7 1467.6 1039.4C1468.6 1039.2 1470.5 1042.0 1471.5 1043.3C1472.9 1044.9 1474.7 1047.1 1475.5 1049.0C1477.1 1053.1 1477.8 1059.3 1479.5 1063.4C1480.2 1065.1 1482.4 1068.5 1483.4 1068.2C1484.8 1067.7 1485.8 1061.7 1487.4 1060.5C1488.2 1059.9 1490.6 1063.1 1491.4 1062.4C1493.0 1061.1 1494.1 1053.8 1495.3 1053.8C1496.5 1053.8 1497.7 1061.3 1499.3 1062.4C1500.1 1063.0 1502.3 1060.6 1503.3 1059.6C1504.7 1058.0 1506.0 1053.8 1507.2 1053.8C1508.4 1053.8 1510.3 1060.1 1511.2 1059.6C1512.7 1058.7 1513.5 1051.8 1515.2 1049.0C1515.9 1047.8 1518.2 1045.7 1519.1 1046.1C1520.6 1046.8 1521.7 1052.3 1523.1 1052.8C1524.1 1053.2 1525.8 1050.1 1527.1 1049.0C1528.2 1048.1 1530.4 1045.4 1531.0 1046.1C1532.8 1048.2 1533.6 1055.0 1535.0 1058.6C1535.9 1061.0 1538.3 1067.5 1539.0 1066.3C1540.7 1063.2 1541.7 1044.7 1542.9 1044.2C1544.0 1043.8 1545.0 1059.8 1546.9 1063.4C1547.4 1064.4 1549.7 1059.6 1550.9 1059.6C1552.0 1059.6 1553.8 1062.1 1554.8 1063.4C1556.1 1065.0 1557.5 1069.0 1558.8 1069.1C1559.9 1069.3 1561.4 1064.7 1562.8 1064.3C1563.8 1064.1 1565.7 1067.6 1566.7 1067.2C1568.1 1066.7 1569.4 1063.1 1570.7 1061.5C1571.8 1060.0 1573.8 1056.0 1574.7 1056.7C1576.2 1058.0 1577.8 1069.4 1578.6 1068.2C1580.2 1065.9 1581.4 1045.2 1582.6 1045.2C1583.8 1045.2 1584.5 1062.3 1586.5 1068.2C1586.9 1069.2 1589.3 1068.3 1590.5 1068.2C1591.7 1068.0 1593.3 1067.2 1594.5 1067.2C1595.7 1067.2 1598.0 1069.1 1598.4 1068.2C1600.3 1064.8 1600.8 1054.8 1602.4 1052.8C1603.1 1052.0 1605.3 1056.8 1606.4 1058.6C1607.7 1060.8 1609.2 1066.3 1610.3 1066.3C1611.5 1066.3 1612.7 1060.5 1614.3 1058.6C1615.1 1057.6 1617.4 1056.2 1618.3 1056.7C1619.8 1057.6 1621.3 1063.9 1622.2 1063.4C1623.6 1062.7 1624.5 1055.5 1626.2 1052.8C1626.9 1051.8 1629.3 1050.4 1630.2 1050.9C1631.7 1051.8 1632.7 1056.9 1634.1 1057.6C1635.1 1058.1 1637.1 1054.4 1638.1 1054.8C1639.5 1055.2 1641.0 1060.5 1642.1 1060.4C1643.3 1060.2 1645.1 1053.0 1646.0 1053.7C1647.5 1054.7 1648.5 1064.9 1650.0 1066.0C1650.9 1066.6 1652.8 1061.3 1654.0 1059.3C1655.2 1057.0 1656.5 1052.3 1657.9 1051.6C1658.9 1051.2 1661.2 1056.2 1661.9 1055.4C1663.6 1053.6 1664.9 1042.2 1665.9 1043.0C1667.3 1044.2 1667.9 1058.2 1669.8 1062.1C1670.3 1063.1 1672.6 1060.1 1673.8 1059.3C1675.0 1058.4 1676.6 1057.3 1677.8 1056.4C1679.0 1055.5 1680.5 1054.3 1681.7 1053.5C1682.9 1052.8 1684.8 1052.5 1685.7 1051.6C1687.2 1050.2 1688.2 1047.1 1689.7 1045.8C1690.5 1045.1 1693.0 1044.2 1693.6 1044.9C1695.3 1046.7 1696.5 1054.7 1697.6 1054.5C1698.9 1054.2 1700.6 1042.4 1701.6 1043.0C1702.9 1043.8 1703.9 1057.3 1705.5 1059.3C1706.3 1060.2 1708.7 1054.7 1709.5 1052.6C1711.1 1048.4 1712.2 1038.3 1713.5 1038.2C1714.6 1038.0 1716.0 1050.7 1717.4 1051.6C1718.4 1052.2 1719.8 1045.1 1721.4 1043.0C1722.1 1042.0 1724.4 1040.7 1725.4 1041.1C1726.8 1041.6 1728.4 1044.2 1729.3 1045.8C1730.8 1048.5 1732.3 1056.0 1733.3 1055.4C1734.7 1054.6 1735.8 1045.3 1737.3 1041.1C1738.2 1038.4 1740.0 1032.4 1741.2 1032.4C1742.4 1032.4 1743.8 1040.6 1745.2 1041.1C1746.2 1041.4 1748.0 1035.2 1749.2 1035.3C1750.4 1035.5 1752.2 1039.9 1753.1 1042.0C1754.6 1045.3 1755.6 1052.6 1757.1 1053.5C1758.0 1054.1 1760.5 1049.0 1761.1 1046.8C1762.9 1039.6 1763.7 1022.7 1765.0 1021.9C1766.1 1021.2 1767.2 1036.3 1769.0 1042.0C1769.5 1043.8 1772.1 1047.3 1773.0 1046.8C1774.4 1045.9 1775.8 1037.1 1776.9 1037.2C1778.2 1037.4 1779.2 1045.9 1780.9 1047.8C1781.6 1048.5 1784.1 1046.9 1784.8 1045.8C1786.5 1043.4 1787.5 1036.8 1788.8 1036.3C1789.8 1035.9 1791.2 1041.8 1792.8 1043.0C1793.6 1043.6 1795.9 1042.8 1796.7 1042.0C1798.2 1040.7 1800.0 1035.3 1800.7 1036.3C1802.4 1038.5 1803.3 1051.7 1804.7 1052.6C1805.7 1053.2 1807.2 1044.4 1808.6 1041.1C1809.6 1038.9 1812.0 1033.2 1812.6 1034.3C1814.4 1037.8 1815.3 1055.8 1816.6 1056.4C1817.7 1056.9 1819.1 1039.2 1820.5 1038.2C1821.5 1037.5 1823.5 1051.1 1824.5 1050.6C1825.8 1050.0 1827.4 1033.8 1828.5 1034.3C1829.8 1035.0 1831.5 1055.6 1832.4 1054.5C1833.9 1052.8 1835.0 1026.7 1836.4 1024.8C1837.3 1023.5 1839.2 1038.2 1840.4 1043.9C1841.6 1050.0 1843.1 1063.8 1844.3 1064.1C1845.5 1064.3 1846.5 1051.0 1848.3 1045.8C1848.9 1044.1 1850.9 1042.2 1852.3 1041.1C1853.3 1040.2 1855.7 1038.3 1856.2 1039.1C1858.0 1041.8 1859.0 1052.4 1860.2 1052.6C1861.4 1052.7 1862.6 1041.7 1864.2 1040.1C1864.9 1039.4 1867.1 1045.2 1868.1 1044.9C1869.5 1044.5 1871.2 1037.2 1872.1 1037.8C1873.6 1038.9 1874.4 1047.0 1876.1 1050.6C1876.8 1052.3 1879.5 1056.6 1880.0 1055.5C1881.9 1051.0 1882.6 1033.3 1884.0 1032.0C1885.0 1031.1 1886.9 1048.3 1888.0 1047.9C1889.2 1047.4 1890.1 1032.6 1891.9 1029.2C1892.5 1028.2 1895.1 1034.0 1895.9 1033.4C1897.5 1032.0 1898.3 1025.4 1899.9 1022.3C1900.6 1020.8 1903.2 1017.3 1903.8 1018.2C1905.6 1020.6 1906.2 1031.7 1907.8 1033.4C1908.6 1034.2 1910.3 1027.2 1911.8 1026.5C1912.7 1026.0 1914.8 1029.7 1915.7 1029.2C1917.2 1028.4 1919.0 1021.2 1919.7 1022.3C1921.4 1025.3 1921.9 1040.0 1923.7 1043.0C1924.3 1044.2 1926.6 1035.8 1927.6 1036.1C1929.0 1036.6 1929.9 1043.7 1931.6 1045.8C1932.2 1046.6 1934.4 1045.8 1935.6 1045.8C1936.7 1045.8 1938.6 1046.4 1939.5 1045.8C1941.0 1044.8 1942.7 1042.1 1943.5 1040.3C1945.1 1036.3 1945.8 1028.1 1947.5 1026.5C1948.2 1025.7 1950.4 1032.3 1951.4 1032.0C1952.8 1031.5 1953.8 1024.8 1955.4 1023.7C1956.2 1023.1 1958.7 1025.3 1959.4 1026.5C1961.0 1029.4 1962.3 1038.0 1963.3 1037.5C1964.7 1036.8 1965.7 1024.0 1967.3 1022.3C1968.1 1021.5 1970.5 1027.0 1971.2 1029.2C1972.9 1034.0 1973.3 1041.5 1975.2 1045.8C1975.7 1046.9 1978.6 1047.9 1979.2 1047.2C1980.9 1045.0 1982.2 1039.5 1983.1 1036.1C1984.6 1030.8 1985.7 1019.4 1987.1 1018.2C1988.0 1017.4 1990.3 1030.5 1991.1 1029.2C1992.7 1026.4 1993.8 1005.0 1995.0 1004.4C1996.1 1003.8 1997.9 1018.8 1999.0 1025.1C2000.3 1032.5 2001.6 1049.0 2003.0 1049.9C2004.0 1050.7 2005.0 1034.6 2006.9 1030.6C2007.4 1029.6 2009.6 1033.1 2010.9 1033.4C2012.0 1033.6 2014.3 1033.0 2014.9 1032.0C2016.7 1028.9 2017.6 1019.8 2018.8 1019.6C2020.0 1019.4 2021.3 1027.5 2022.8 1030.6C2023.7 1032.4 2025.6 1036.1 2026.8 1036.1C2028.0 1036.1 2029.3 1031.4 2030.7 1030.6C2031.6 1030.1 2033.7 1032.4 2034.7 1032.0C2036.1 1031.4 2037.3 1028.5 2038.7 1027.5C2039.6 1026.9 2042.2 1025.9 2042.6 1026.8C2044.6 1030.7 2044.9 1040.9 2046.6 1043.3C2047.3 1044.2 2050.1 1039.9 2050.6 1038.0C2052.5 1030.3 2052.8 1015.3 2054.5 1011.4C2055.2 1010.0 2057.1 1019.5 2058.5 1020.2C2059.4 1020.7 2061.7 1014.8 2062.5 1015.5C2064.0 1016.8 2064.7 1023.9 2066.4 1027.0C2067.1 1028.3 2069.9 1031.1 2070.4 1030.1C2072.3 1025.9 2072.7 1015.7 2074.4 1009.7C2075.1 1007.3 2077.3 1001.7 2078.3 1002.1C2079.7 1002.6 2080.5 1010.2 2082.3 1012.6C2082.9 1013.5 2085.5 1013.8 2086.3 1013.1C2087.9 1011.5 2089.1 1004.7 2090.2 1005.0C2091.5 1005.2 2092.8 1014.1 2094.2 1014.8C2095.1 1015.3 2096.9 1009.2 2098.2 1009.0C2099.3 1008.9 2101.4 1012.1 2102.1 1013.8C2103.8 1017.9 2104.2 1025.1 2106.1 1028.4C2106.6 1029.3 2109.8 1028.6 2110.1 1027.5C2112.1 1020.0 2112.7 1000.2 2114.0 999.6C2115.1 999.0 2116.3 1020.6 2118.0 1023.6C2118.7 1024.8 2121.1 1016.7 2122.0 1013.6C2123.5 1008.0 2124.1 997.8 2125.9 994.6C2126.5 993.6 2129.0 997.9 2129.9 999.6C2131.4 1002.4 2133.1 1006.5 2133.9 1009.6C2135.5 1016.0 2136.7 1032.1 2137.8 1031.5C2139.1 1030.9 2139.9 1010.3 2141.8 1005.6C2142.3 1004.3 2145.2 1012.7 2145.8 1011.6C2147.5 1008.2 2148.7 996.9 2149.7 990.6C2151.1 982.6 2152.7 971.8 2153.7 963.7C2155.1 952.6 2156.5 926.7 2157.7 926.7C2158.8 926.7 2159.5 953.2 2161.6 963.7C2161.9 964.9 2165.1 964.5 2165.6 965.7C2167.5 969.9 2168.2 981.0 2169.6 981.6C2170.6 982.2 2172.9 973.4 2173.5 969.7C2175.3 959.0 2175.4 943.9 2177.5 933.7C2177.7 932.5 2181.1 930.7 2181.4 931.7C2183.5 938.8 2184.1 959.7 2185.4 960.7C2186.5 961.5 2188.4 936.6 2189.4 937.7C2190.8 939.3 2191.3 960.6 2193.3 969.7C2193.7 971.1 2196.7 973.5 2197.3 972.7C2199.1 970.5 2199.8 960.6 2201.3 959.7C2202.2 959.1 2204.3 968.3 2205.2 967.7C2206.7 966.6 2208.2 957.9 2209.2 953.7C2210.5 948.3 2211.8 936.8 2213.2 935.7C2214.1 935.0 2216.5 949.6 2217.1 947.7C2218.9 942.2 2219.9 910.9 2221.1 910.9C2222.3 911.0 2223.7 945.9 2225.1 947.8C2226.1 949.2 2227.7 923.2 2229.0 922.0C2230.0 921.0 2231.0 936.0 2233.0 940.6C2233.4 941.6 2236.5 941.6 2237.0 940.6C2238.9 936.6 2239.7 924.3 2240.9 924.0C2242.1 923.7 2244.0 940.0 2244.9 938.7C2246.4 936.6 2247.1 920.5 2248.9 912.9C2249.4 910.5 2251.8 907.8 2252.8 905.6C2254.1 902.9 2255.3 897.4 2256.8 896.4C2257.6 895.8 2260.4 898.5 2260.8 900.0C2262.8 907.6 2262.7 919.3 2264.7 926.8C2265.1 928.1 2268.4 930.7 2268.7 929.5C2270.8 920.5 2270.6 903.4 2272.7 892.7C2273.0 890.9 2276.3 886.7 2276.6 888.1C2278.7 895.6 2279.4 911.9 2280.6 922.2C2281.8 932.7 2283.1 954.6 2284.6 957.2C2285.5 958.7 2287.7 942.4 2288.5 936.0C2290.1 923.9 2290.8 900.8 2292.5 895.4C2293.2 893.3 2295.4 911.5 2296.5 911.1C2297.7 910.6 2299.8 890.0 2300.4 892.7C2302.2 900.2 2302.9 941.4 2304.4 945.2C2305.3 947.5 2306.5 918.9 2308.4 912.9C2308.8 911.4 2311.6 921.4 2312.3 920.3C2314.0 917.6 2315.4 906.2 2316.3 900.0C2317.7 890.4 2318.8 870.4 2320.3 867.8C2321.1 866.3 2323.4 888.1 2324.2 886.2C2325.8 882.6 2327.0 849.8 2328.2 849.4C2329.3 849.0 2330.7 873.3 2332.2 883.5C2333.1 890.4 2335.2 907.8 2336.1 906.5C2337.5 904.5 2338.6 875.4 2340.1 872.4C2340.9 870.7 2342.9 885.3 2344.1 890.8C2345.3 896.9 2346.7 905.0 2348.0 911.1C2349.1 915.8 2350.8 922.1 2352.0 926.8C2353.2 931.7 2354.9 944.2 2356.0 943.3C2357.3 942.2 2358.9 927.2 2359.9 920.3C2361.3 911.5 2362.9 899.7 2363.9 890.8C2365.3 877.9 2366.5 860.5 2367.9 847.5C2368.9 837.8 2369.8 822.3 2371.8 815.3C2372.2 814.0 2375.4 818.1 2375.8 819.9C2377.8 829.7 2379.1 843.7 2379.7 854.0C2381.5 881.3 2382.6 947.1 2383.7 945.2C2385.0 943.0 2385.8 871.6 2387.7 840.2C2388.2 831.3 2389.5 818.5 2391.6 810.7C2391.9 809.6 2395.1 811.6 2395.6 810.7C2397.5 806.9 2398.3 799.7 2399.6 795.0C2400.7 790.8 2402.5 780.6 2403.5 781.2C2404.9 782.0 2406.8 794.0 2407.5 799.6C2409.2 812.5 2409.6 835.6 2411.5 842.9C2412.0 845.0 2414.3 830.7 2415.4 830.9C2416.7 831.2 2419.3 840.5 2419.4 844.8C2421.7 919.3 2421.0 1020.3 2423.4 1093.8C2423.4 1093.8 2426.2 1093.8 2427.3 1093.8" stroke="#007bff" stroke-width="4.5" fill="none" stroke-linejoin="round"/><g fill="rgba(0,123,255,0.3)" stroke="#007bff" stroke-width="2"><circle cx="484.0" cy="1093.8" r="4.6"/><circle cx="488.0" cy="1093.8" r="4.6"/><circle cx="491.9" cy="1063.7" r="4.6"/><circle cx="495.9" cy="1069.0" r="4.6"/><circle cx="499.9" cy="1057.5" r="4.6"/><circle cx="503.8" cy="1063.3" r="4.6"/><circle cx="507.8" cy="1069.0" r="4.6"/><circle cx="511.8" cy="1069.0" r="4.6"/><circle cx="515.7" cy="1065.7" r="4.6"/><circle cx="519.7" cy="1062.3" r="4.6"/><circle cx="523.7" cy="1069.0" r="4.6"/><circle cx="527.6" cy="1064.2" r="4.6"/><circle cx="531.6" cy="1069.0" r="4.6"/><circle cx="535.6" cy="1058.5" r="4.6"/><circle cx="539.5" cy="1067.1" r="4.6"/><circle cx="543.5" cy="1066.1" r="4.6"/><circle cx="547.5" cy="1062.3" r="4.6"/><circle cx="551.4" cy="1069.0" r="4.6"/><circle cx="555.4" cy="1056.6" r="4.6"/><circle cx="559.4" cy="1065.2" r="4.6"/><circle cx="563.3" cy="1069.0" r="4.6"/><circle cx="567.3" cy="1062.3" r="4.6"/><circle cx="571.3" cy="1067.1" r="4.6"/><circle cx="575.2" cy="1065.2" r="4.6"/><circle cx="579.2" cy="1073.3" r="4.6"/><circle cx="583.1" cy="1058.5" r="4.6"/><circle cx="587.1" cy="1063.3" r="4.6"/><circle cx="591.1" cy="1067.1" r="4.6"/><circle cx="595.0" cy="1073.8" r="4.6"/><circle cx="599.0" cy="1059.4" r="4.6"/><circle cx="603.0" cy="1051.8" r="4.6"/><circle cx="606.9" cy="1068.1" r="4.6"/><circle cx="610.9" cy="1056.6" r="4.6"/><circle cx="614.9" cy="1061.3" r="4.6"/><circle cx="618.8" cy="1069.0" r="4.6"/><circle cx="622.8" cy="1069.0" r="4.6"/><circle cx="626.8" cy="1056.6" r="4.6"/><circle cx="630.7" cy="1047.0" r="4.6"/><circle cx="634.7" cy="1057.5" r="4.6"/><circle cx="638.7" cy="1067.1" r="4.6"/><circle cx="642.6" cy="1053.7" r="4.6"/><circle cx="646.6" cy="1057.5" r="4.6"/><circle cx="650.6" cy="1069.0" r="4.6"/><circle cx="654.5" cy="1057.5" r="4.6"/><circle cx="658.5" cy="1048.9" r="4.6"/><circle cx="662.5" cy="1057.5" r="4.6"/><circle cx="666.4" cy="1063.3" r="4.6"/><circle cx="670.4" cy="1059.4" r="4.6"/><circle cx="674.4" cy="1069.0" r="4.6"/><circle cx="678.3" cy="1059.4" r="4.6"/><circle cx="682.3" cy="1055.6" r="4.6"/><circle cx="686.3" cy="1059.4" r="4.6"/><circle cx="690.2" cy="1053.7" r="4.6"/><circle cx="694.2" cy="1070.9" r="4.6"/><circle cx="698.2" cy="1053.7" r="4.6"/><circle cx="702.1" cy="1050.8" r="4.6"/><circle cx="706.1" cy="1057.5" r="4.6"/><circle cx="710.1" cy="1049.8" r="4.6"/><circle cx="714.0" cy="1057.3" r="4.6"/><circle cx="718.0" cy="1041.2" r="4.6"/><circle cx="722.0" cy="1041.8" r="4.6"/><circle cx="725.9" cy="1056.1" r="4.6"/><circle cx="729.9" cy="1070.5" r="4.6"/><circle cx="733.9" cy="1064.8" r="4.6"/><circle cx="737.8" cy="1059.0" r="4.6"/><circle cx="741.8" cy="1060.4" r="4.6"/><circle cx="745.8" cy="1061.9" r="4.6"/><circle cx="749.7" cy="1055.7" r="4.6"/><circle cx="753.7" cy="1049.4" r="4.6"/><circle cx="757.7" cy="1066.7" r="4.6"/><circle cx="761.6" cy="1066.7" r="4.6"/><circle cx="765.6" cy="1061.9" r="4.6"/><circle cx="769.6" cy="1057.1" r="4.6"/><circle cx="773.5" cy="1068.6" r="4.6"/><circle cx="777.5" cy="1059.0" r="4.6"/><circle cx="781.5" cy="1049.4" r="4.6"/><circle cx="785.4" cy="1072.4" r="4.6"/><circle cx="789.4" cy="1060.0" r="4.6"/><circle cx="793.3" cy="1047.5" r="4.6"/><circle cx="797.3" cy="1043.7" r="4.6"/><circle cx="801.3" cy="1050.4" r="4.6"/><circle cx="805.2" cy="1057.1" r="4.6"/><circle cx="809.2" cy="1048.5" r="4.6"/><circle cx="813.2" cy="1060.9" r="4.6"/><circle cx="817.1" cy="1066.7" r="4.6"/><circle cx="821.1" cy="1059.0" r="4.6"/><circle cx="825.1" cy="1051.3" r="4.6"/><circle cx="829.0" cy="1061.9" r="4.6"/><circle cx="833.0" cy="1059.5" r="4.6"/><circle cx="837.0" cy="1057.1" r="4.6"/><circle cx="840.9" cy="1059.0" r="4.6"/><circle cx="844.9" cy="1070.5" r="4.6"/><circle cx="848.9" cy="1059.5" r="4.6"/><circle cx="852.8" cy="1048.5" r="4.6"/><circle cx="856.8" cy="1055.7" r="4.6"/><circle cx="860.8" cy="1062.8" r="4.6"/><circle cx="864.7" cy="1068.6" r="4.6"/><circle cx="868.7" cy="1051.3" r="4.6"/><circle cx="872.7" cy="1053.7" r="4.6"/><circle cx="876.6" cy="1056.1" r="4.6"/><circle cx="880.6" cy="1052.3" r="4.6"/><circle cx="884.6" cy="1048.5" r="4.6"/><circle cx="888.5" cy="1054.2" r="4.6"/><circle cx="892.5" cy="1063.8" r="4.6"/><circle cx="896.5" cy="1066.7" r="4.6"/><circle cx="900.4" cy="1071.0" r="4.6"/><circle cx="904.4" cy="1075.3" r="4.6"/><circle cx="908.4" cy="1075.3" r="4.6"/><circle cx="912.3" cy="1075.3" r="4.6"/><circle cx="916.3" cy="1063.8" r="4.6"/><circle cx="920.3" cy="1058.5" r="4.6"/><circle cx="924.2" cy="1053.3" r="4.6"/><circle cx="928.2" cy="1057.1" r="4.6"/><circle cx="932.2" cy="1067.2" r="4.6"/><circle cx="936.1" cy="1077.2" r="4.6"/><circle cx="940.1" cy="1057.1" r="4.6"/><circle cx="944.1" cy="1059.0" r="4.6"/><circle cx="948.0" cy="1059.0" r="4.6"/><circle cx="952.0" cy="1073.4" r="4.6"/><circle cx="956.0" cy="1072.4" r="4.6"/><circle cx="959.9" cy="1051.3" r="4.6"/><circle cx="963.9" cy="1059.0" r="4.6"/><circle cx="967.9" cy="1062.8" r="4.6"/><circle cx="971.8" cy="1066.7" r="4.6"/><circle cx="975.8" cy="1057.1" r="4.6"/><circle cx="979.8" cy="1054.2" r="4.6"/><circle cx="983.7" cy="1057.1" r="4.6"/><circle cx="987.7" cy="1057.1" r="4.6"/><circle cx="991.6" cy="1055.2" r="4.6"/><circle cx="995.6" cy="1057.1" r="4.6"/><circle cx="999.6" cy="1057.1" r="4.6"/><circle cx="1003.5" cy="1056.1" r="4.6"/><circle cx="1007.5" cy="1071.5" r="4.6"/><circle cx="1011.5" cy="1075.3" r="4.6"/><circle cx="1015.4" cy="1062.8" r="4.6"/><circle cx="1019.4" cy="1055.2" r="4.6"/><circle cx="1023.4" cy="1060.9" r="4.6"/><circle cx="1027.3" cy="1066.7" r="4.6"/><circle cx="1031.3" cy="1062.8" r="4.6"/><circle cx="1035.3" cy="1063.8" r="4.6"/><circle cx="1039.2" cy="1060.0" r="4.6"/><circle cx="1043.2" cy="1058.1" r="4.6"/><circle cx="1047.2" cy="1054.2" r="4.6"/><circle cx="1051.1" cy="1056.1" r="4.6"/><circle cx="1055.1" cy="1075.3" r="4.6"/><circle cx="1059.1" cy="1060.9" r="4.6"/><circle cx="1063.0" cy="1066.7" r="4.6"/><circle cx="1067.0" cy="1067.6" r="4.6"/><circle cx="1071.0" cy="1071.5" r="4.6"/><circle cx="1074.9" cy="1061.9" r="4.6"/><circle cx="1078.9" cy="1064.8" r="4.6"/><circle cx="1082.9" cy="1060.0" r="4.6"/><circle cx="1086.8" cy="1057.1" r="4.6"/><circle cx="1090.8" cy="1066.7" r="4.6"/><circle cx="1094.8" cy="1042.7" r="4.6"/><circle cx="1098.7" cy="1055.2" r="4.6"/><circle cx="1102.7" cy="1046.6" r="4.6"/><circle cx="1106.7" cy="1049.4" r="4.6"/><circle cx="1110.6" cy="1065.7" r="4.6"/><circle cx="1114.6" cy="1063.8" r="4.6"/><circle cx="1118.6" cy="1068.6" r="4.6"/><circle cx="1122.5" cy="1061.9" r="4.6"/><circle cx="1126.5" cy="1066.7" r="4.6"/><circle cx="1130.5" cy="1057.1" r="4.6"/><circle cx="1134.4" cy="1048.5" r="4.6"/><circle cx="1138.4" cy="1060.9" r="4.6"/><circle cx="1142.4" cy="1064.8" r="4.6"/><circle cx="1146.3" cy="1062.8" r="4.6"/><circle cx="1150.3" cy="1057.1" r="4.6"/><circle cx="1154.3" cy="1061.9" r="4.6"/><circle cx="1158.2" cy="1060.0" r="4.6"/><circle cx="1162.2" cy="1068.6" r="4.6"/><circle cx="1166.2" cy="1066.7" r="4.6"/><circle cx="1170.1" cy="1060.0" r="4.6"/><circle cx="1174.1" cy="1055.2" r="4.6"/><circle cx="1178.1" cy="1042.0" r="4.6"/><circle cx="1182.0" cy="1045.4" r="4.6"/><circle cx="1186.0" cy="1061.5" r="4.6"/><circle cx="1189.9" cy="1047.1" r="4.6"/><circle cx="1193.9" cy="1040.4" r="4.6"/><circle cx="1197.9" cy="1050.9" r="4.6"/><circle cx="1201.8" cy="1056.7" r="4.6"/><circle cx="1205.8" cy="1064.3" r="4.6"/><circle cx="1209.8" cy="1059.6" r="4.6"/><circle cx="1213.7" cy="1049.0" r="4.6"/><circle cx="1217.7" cy="1054.8" r="4.6"/><circle cx="1221.7" cy="1054.8" r="4.6"/><circle cx="1225.6" cy="1054.8" r="4.6"/><circle cx="1229.6" cy="1042.3" r="4.6"/><circle cx="1233.6" cy="1057.6" r="4.6"/><circle cx="1237.5" cy="1052.8" r="4.6"/><circle cx="1241.5" cy="1057.6" r="4.6"/><circle cx="1245.5" cy="1049.0" r="4.6"/><circle cx="1249.4" cy="1046.1" r="4.6"/><circle cx="1253.4" cy="1043.3" r="4.6"/><circle cx="1257.4" cy="1052.8" r="4.6"/><circle cx="1261.3" cy="1035.6" r="4.6"/><circle cx="1265.3" cy="1045.2" r="4.6"/><circle cx="1269.3" cy="1040.4" r="4.6"/><circle cx="1273.2" cy="1046.1" r="4.6"/><circle cx="1277.2" cy="1056.7" r="4.6"/><circle cx="1281.2" cy="1042.3" r="4.6"/><circle cx="1285.1" cy="1035.6" r="4.6"/><circle cx="1289.1" cy="1043.3" r="4.6"/><circle cx="1293.1" cy="1032.7" r="4.6"/><circle cx="1297.0" cy="1037.5" r="4.6"/><circle cx="1301.0" cy="1042.3" r="4.6"/><circle cx="1305.0" cy="1047.1" r="4.6"/><circle cx="1308.9" cy="1054.8" r="4.6"/><circle cx="1312.9" cy="1061.5" r="4.6"/><circle cx="1316.9" cy="1029.8" r="4.6"/><circle cx="1320.8" cy="1039.4" r="4.6"/><circle cx="1324.8" cy="1051.9" r="4.6"/><circle cx="1328.8" cy="1055.7" r="4.6"/><circle cx="1332.7" cy="1047.1" r="4.6"/><circle cx="1336.7" cy="1037.5" r="4.6"/><circle cx="1340.7" cy="1066.3" r="4.6"/><circle cx="1344.6" cy="1045.2" r="4.6"/><circle cx="1348.6" cy="1037.5" r="4.6"/><circle cx="1352.6" cy="1049.0" r="4.6"/><circle cx="1356.5" cy="1057.6" r="4.6"/><circle cx="1360.5" cy="1071.1" r="4.6"/><circle cx="1364.5" cy="1064.3" r="4.6"/><circle cx="1368.4" cy="1069.1" r="4.6"/><circle cx="1372.4" cy="1066.3" r="4.6"/><circle cx="1376.3" cy="1063.4" r="4.6"/><circle cx="1380.3" cy="1049.0" r="4.6"/><circle cx="1384.3" cy="1051.9" r="4.6"/><circle cx="1388.2" cy="1040.4" r="4.6"/><circle cx="1392.2" cy="1056.7" r="4.6"/><circle cx="1396.2" cy="1064.3" r="4.6"/><circle cx="1400.1" cy="1059.6" r="4.6"/><circle cx="1404.1" cy="1061.5" r="4.6"/><circle cx="1408.1" cy="1060.0" r="4.6"/><circle cx="1412.0" cy="1062.4" r="4.6"/><circle cx="1416.0" cy="1073.0" r="4.6"/><circle cx="1420.0" cy="1061.5" r="4.6"/><circle cx="1423.9" cy="1059.6" r="4.6"/><circle cx="1427.9" cy="1068.2" r="4.6"/><circle cx="1431.9" cy="1052.8" r="4.6"/><circle cx="1435.8" cy="1043.3" r="4.6"/><circle cx="1439.8" cy="1052.8" r="4.6"/><circle cx="1443.8" cy="1035.6" r="4.6"/><circle cx="1447.7" cy="1041.3" r="4.6"/><circle cx="1451.7" cy="1041.3" r="4.6"/><circle cx="1455.7" cy="1035.6" r="4.6"/><circle cx="1459.6" cy="1027.9" r="4.6"/><circle cx="1463.6" cy="1045.2" r="4.6"/><circle cx="1467.6" cy="1039.4" r="4.6"/><circle cx="1471.5" cy="1043.3" r="4.6"/><circle cx="1475.5" cy="1049.0" r="4.6"/><circle cx="1479.5" cy="1063.4" r="4.6"/><circle cx="1483.4" cy="1068.2" r="4.6"/><circle cx="1487.4" cy="1060.5" r="4.6"/><circle cx="1491.4" cy="1062.4" r="4.6"/><circle cx="1495.3" cy="1053.8" r="4.6"/><circle cx="1499.3" cy="1062.4" r="4.6"/><circle cx="1503.3" cy="1059.6" r="4.6"/><circle cx="1507.2" cy="1053.8" r="4.6"/><circle cx="1511.2" cy="1059.6" r="4.6"/><circle cx="1515.2" cy="1049.0" r="4.6"/><circle cx="1519.1" cy="1046.1" r="4.6"/><circle cx="1523.1" cy="1052.8" r="4.6"/><circle cx="1527.1" cy="1049.0" r="4.6"/><circle cx="1531.0" cy="1046.1" r="4.6"/><circle cx="1535.0" cy="1058.6" r="4.6"/><circle cx="1539.0" cy="1066.3" r="4.6"/><circle cx="1542.9" cy="1044.2" r="4.6"/><circle cx="1546.9" cy="1063.4" r="4.6"/><circle cx="1550.9" cy="1059.6" r="4.6"/><circle cx="1554.8" cy="1063.4" r="4.6"/><circle cx="1558.8" cy="1069.1" r="4.6"/><circle cx="1562.8" cy="1064.3" r="4.6"/><circle cx="1566.7" cy="1067.2" r="4.6"/><circle cx="1570.7" cy="1061.5" r="4.6"/><circle cx="1574.7" cy="1056.7" r="4.6"/><circle cx="1578.6" cy="1068.2" r="4.6"/><circle cx="1582.6" cy="1045.2" r="4.6"/><circle cx="1586.5" cy="1068.2" r="4.6"/><circle cx="1590.5" cy="1068.2" r="4.6"/><circle cx="1594.5" cy="1067.2" r="4.6"/><circle cx="1598.4" cy="1068.2" r="4.6"/><circle cx="1602.4" cy="1052.8" r="4.6"/><circle cx="1606.4" cy="1058.6" r="4.6"/><circle cx="1610.3" cy="1066.3" r="4.6"/><circle cx="1614.3" cy="1058.6" r="4.6"/><circle cx="1618.3" cy="1056.7" r="4.6"/><circle cx="1622.2" cy="1063.4" r="4.6"/><circle cx="1626.2" cy="1052.8" r="4.6"/><circle cx="1630.2" cy="1050.9" r="4.6"/><circle cx="1634.1" cy="1057.6" r="4.6"/><circle cx="1638.1" cy="1054.8" r="4.6"/><circle cx="1642.1" cy="1060.4" r="4.6"/><circle cx="1646.0" cy="1053.7" r="4.6"/><circle cx="1650.0" cy="1066.0" r="4.6"/><circle cx="1654.0" cy="1059.3" r="4.6"/><circle cx="1657.9" cy="1051.6" r="4.6"/><circle cx="1661.9" cy="1055.4" r="4.6"/><circle cx="1665.9" cy="1043.0" r="4.6"/><circle cx="1669.8" cy="1062.1" r="4.6"/><circle cx="1673.8" cy="1059.3" r="4.6"/><circle cx="1677.8" cy="1056.4" r="4.6"/><circle cx="1681.7" cy="1053.5" r="4.6"/><circle cx="1685.7" cy="1051.6" r="4.6"/><circle cx="1689.7" cy="1045.8" r="4.6"/><circle cx="1693.6" cy="1044.9" r="4.6"/><circle cx="1697.6" cy="1054.5" r="4.6"/><circle cx="1701.6" cy="1043.0" r="4.6"/><circle cx="1705.5" cy="1059.3" r="4.6"/><circle cx="1709.5" cy="1052.6" r="4.6"/><circle cx="1713.5" cy="1038.2" r="4.6"/><circle cx="1717.4" cy="1051.6" r="4.6"/><circle cx="1721.4" cy="1043.0" r="4.6"/><circle cx="1725.4" cy="1041.1" r="4.6"/><circle cx="1729.3" cy="1045.8" r="4.6"/><circle cx="1733.3" cy="1055.4" r="4.6"/><circle cx="1737.3" cy="1041.1" r="4.6"/><circle cx="1741.2" cy="1032.4" r="4.6"/><circle cx="1745.2" cy="1041.1" r="4.6"/><circle cx="1749.2" cy="1035.3" r="4.6"/><circle cx="1753.1" cy="1042.0" r="4.6"/><circle cx="1757.1" cy="1053.5" r="4.6"/><circle cx="1761.1" cy="1046.8" r="4.6"/><circle cx="1765.0" cy="1021.9" r="4.6"/><circle cx="1769.0" cy="1042.0" r="4.6"/><circle cx="1773.0" cy="1046.8" r="4.6"/><circle cx="1776.9" cy="1037.2" r="4.6"/><circle cx="1780.9" cy="1047.8" r="4.6"/><circle cx="1784.8" cy="1045.8" r="4.6"/><circle cx="1788.8" cy="1036.3" r="4.6"/><circle cx="1792.8" cy="1043.0" r="4.6"/><circle cx="1796.7" cy="1042.0" r="4.6"/><circle cx="1800.7" cy="1036.3" r="4.6"/><circle cx="1804.7" cy="1052.6" r="4.6"/><circle cx="1808.6" cy="1041.1" r="4.6"/><circle cx="1812.6" cy="1034.3" r="4.6"/><circle cx="1816.6" cy="1056.4" r="4.6"/><circle cx="1820.5" cy="1038.2" r="4.6"/><circle cx="1824.5" cy="1050.6" r="4.6"/><circle cx="1828.5" cy="1034.3" r="4.6"/><circle cx="1832.4" cy="1054.5" r="4.6"/><circle cx="1836.4" cy="1024.8" r="4.6"/><circle cx="1840.4" cy="1043.9" r="4.6"/><circle cx="1844.3" cy="1064.1" r="4.6"/><circle cx="1848.3" cy="1045.8" r="4.6"/><circle cx="1852.3" cy="1041.1" r="4.6"/><circle cx="1856.2" cy="1039.1" r="4.6"/><circle cx="1860.2" cy="1052.6" r="4.6"/><circle cx="1864.2" cy="1040.1" r="4.6"/><circle cx="1868.1" cy="1044.9" r="4.6"/><circle cx="1872.1" cy="1037.8" r="4.6"/><circle cx="1876.1" cy="1050.6" r="4.6"/><circle cx="1880.0" cy="1055.5" r="4.6"/><circle cx="1884.0" cy="1032.0" r="4.6"/><circle cx="1888.0" cy="1047.9" r="4.6"/><circle cx="1891.9" cy="1029.2" r="4.6"/><circle cx="1895.9" cy="1033.4" r="4.6"/><circle cx="1899.9" cy="1022.3" r="4.6"/><circle cx="1903.8" cy="1018.2" r="4.6"/><circle cx="1907.8" cy="1033.4" r="4.6"/><circle cx="1911.8" cy="1026.5" r="4.6"/><circle cx="1915.7" cy="1029.2" r="4.6"/><circle cx="1919.7" cy="1022.3" r="4.6"/><circle cx="1923.7" cy="1043.0" r="4.6"/><circle cx="1927.6" cy="1036.1" r="4.6"/><circle cx="1931.6" cy="1045.8" r="4.6"/><circle cx="1935.6" cy="1045.8" r="4.6"/><circle cx="1939.5" cy="1045.8" r="4.6"/><circle cx="1943.5" cy="1040.3" r="4.6"/><circle cx="1947.5" cy="1026.5" r="4.6"/><circle cx="1951.4" cy="1032.0" r="4.6"/><circle cx="1955.4" cy="1023.7" r="4.6"/><circle cx="1959.4" cy="1026.5" r="4.6"/><circle cx="1963.3" cy="1037.5" r="4.6"/><circle cx="1967.3" cy="1022.3" r="4.6"/><circle cx="1971.2" cy="1029.2" r="4.6"/><circle cx="1975.2" cy="1045.8" r="4.6"/><circle cx="1979.2" cy="1047.2" r="4.6"/><circle cx="1983.1" cy="1036.1" r="4.6"/><circle cx="1987.1" cy="1018.2" r="4.6"/><circle cx="1991.1" cy="1029.2" r="4.6"/><circle cx="1995.0" cy="1004.4" r="4.6"/><circle cx="1999.0" cy="1025.1" r="4.6"/><circle cx="2003.0" cy="1049.9" r="4.6"/><circle cx="2006.9" cy="1030.6" r="4.6"/><circle cx="2010.9" cy="1033.4" r="4.6"/><circle cx="2014.9" cy="1032.0" r="4.6"/><circle cx="2018.8" cy="1019.6" r="4.6"/><circle cx="2022.8" cy="1030.6" r="4.6"/><circle cx="2026.8" cy="1036.1" r="4.6"/><circle cx="2030.7" cy="1030.6" r="4.6"/><circle cx="2034.7" cy="1032.0" r="4.6"/><circle cx="2038.7" cy="1027.5" r="4.6"/><circle cx="2042.6" cy="1026.8" r="4.6"/><circle cx="2046.6" cy="1043.3" r="4.6"/><circle cx="2050.6" cy="1038.0" r="4.6"/><circle cx="2054.5" cy="1011.4" r="4.6"/><circle cx="2058.5" cy="1020.2" r="4.6"/><circle cx="2062.5" cy="1015.5" r="4.6"/><circle cx="2066.4" cy="1027.0" r="4.6"/><circle cx="2070.4" cy="1030.1" r="4.6"/><circle cx="2074.4" cy="1009.7" r="4.6"/><circle cx="2078.3" cy="1002.1" r="4.6"/><circle cx="2082.3" cy="1012.6" r="4.6"/><circle cx="2086.3" cy="1013.1" r="4.6"/><circle cx="2090.2" cy="1005.0" r="4.6"/><circle cx="2094.2" cy="1014.8" r="4.6"/><circle cx="2098.2" cy="1009.0" r="4.6"/><circle cx="2102.1" cy="1013.8" r="4.6"/><circle cx="2106.1" cy="1028.4" r="4.6"/><circle cx="2110.1" cy="1027.5" r="4.6"/><circle cx="2114.0" cy="999.6" r="4.6"/><circle cx="2118.0" cy="1023.6" r="4.6"/><circle cx="2122.0" cy="1013.6" r="4.6"/><circle cx="2125.9" cy="994.6" r="4.6"/><circle cx="2129.9" cy="999.6" r="4.6"/><circle cx="2133.9" cy="1009.6" r="4.6"/><circle cx="2137.8" cy="1031.5" r="4.6"/><circle cx="2141.8" cy="1005.6" r="4.6"/><circle cx="2145.8" cy="1011.6" r="4.6"/><circle cx="2149.7" cy="990.6" r="4.6"/><circle cx="2153.7" cy="963.7" r="4.6"/><circle cx="2157.7" cy="926.7" r="4.6"/><circle cx="2161.6" cy="963.7" r="4.6"/><circle cx="2165.6" cy="965.7" r="4.6"/><circle cx="2169.6" cy="981.6" r="4.6"/><circle cx="2173.5" cy="969.7" r="4.6"/><circle cx="2177.5" cy="933.7" r="4.6"/><circle cx="2181.4" cy="931.7" r="4.6"/><circle cx="2185.4" cy="960.7" r="4.6"/><circle cx="2189.4" cy="937.7" r="4.6"/><circle cx="2193.3" cy="969.7" r="4.6"/><circle cx="2197.3" cy="972.7" r="4.6"/><circle cx="2201.3" cy="959.7" r="4.6"/><circle cx="2205.2" cy="967.7" r="4.6"/><circle cx="2209.2" cy="953.7" r="4.6"/><circle cx="2213.2" cy="935.7" r="4.6"/><circle cx="2217.1" cy="947.7" r="4.6"/><circle cx="2221.1" cy="910.9" r="4.6"/><circle cx="2225.1" cy="947.8" r="4.6"/><circle cx="2229.0" cy="922.0" r="4.6"/><circle cx="2233.0" cy="940.6" r="4.6"/><circle cx="2237.0" cy="940.6" r="4.6"/><circle cx="2240.9" cy="924.0" r="4.6"/><circle cx="2244.9" cy="938.7" r="4.6"/><circle cx="2248.9" cy="912.9" r="4.6"/><circle cx="2252.8" cy="905.6" r="4.6"/><circle cx="2256.8" cy="896.4" r="4.6"/><circle cx="2260.8" cy="900.0" r="4.6"/><circle cx="2264.7" cy="926.8" r="4.6"/><circle cx="2268.7" cy="929.5" r="4.6"/><circle cx="2272.7" cy="892.7" r="4.6"/><circle cx="2276.6" cy="888.1" r="4.6"/><circle cx="2280.6" cy="922.2" r="4.6"/><circle cx="2284.6" cy="957.2" r="4.6"/><circle cx="2288.5" cy="936.0" r="4.6"/><circle cx="2292.5" cy="895.4" r="4.6"/><circle cx="2296.5" cy="911.1" r="4.6"/><circle cx="2300.4" cy="892.7" r="4.6"/><circle cx="2304.4" cy="945.2" r="4.6"/><circle cx="2308.4" cy="912.9" r="4.6"/><circle cx="2312.3" cy="920.3" r="4.6"/><circle cx="2316.3" cy="900.0" r="4.6"/><circle cx="2320.3" cy="867.8" r="4.6"/><circle cx="2324.2" cy="886.2" r="4.6"/><circle cx="2328.2" cy="849.4" r="4.6"/><circle cx="2332.2" cy="883.5" r="4.6"/><circle cx="2336.1" cy="906.5" r="4.6"/><circle cx="2340.1" cy="872.4" r="4.6"/><circle cx="2344.1" cy="890.8" r="4.6"/><circle cx="2348.0" cy="911.1" r="4.6"/><circle cx="2352.0" cy="926.8" r="4.6"/><circle cx="2356.0" cy="943.3" r="4.6"/><circle cx="2359.9" cy="920.3" r="4.6"/><circle cx="2363.9" cy="890.8" r="4.6"/><circle cx="2367.9" cy="847.5" r="4.6"/><circle cx="2371.8" cy="815.3" r="4.6"/><circle cx="2375.8" cy="819.9" r="4.6"/><circle cx="2379.7" cy="854.0" r="4.6"/><circle cx="2383.7" cy="945.2" r="4.6"/><circle cx="2387.7" cy="840.2" r="4.6"/><circle cx="2391.6" cy="810.7" r="4.6"/><circle cx="2395.6" cy="810.7" r="4.6"/><circle cx="2399.6" cy="795.0" r="4.6"/><circle cx="2403.5" cy="781.2" r="4.6"/><circle cx="2407.5" cy="799.6" r="4.6"/><circle cx="2411.5" cy="842.9" r="4.6"/><circle cx="2415.4" cy="830.9" r="4.6"/><circle cx="2419.4" cy="844.8" r="4.6"/><circle cx="2423.4" cy="1093.8" r="4.6"/><circle cx="2427.3" cy="1093.8" r="4.6"/></g><path d="M484 971H2427" stroke="#28a745" stroke-width="3" stroke-dasharray="9 6"/><path d="M484 1031.3H2427" stroke="#007bff" stroke-width="3" stroke-dasharray="9 6"/><path d="M484 1027.3H2428" stroke="#000" stroke-width="3" stroke-dasharray="3 3"/><path d="M484 1052.4H2428" stroke="#000" stroke-width="3" stroke-dasharray="3 3"/><rect x="1302" y="1214" width="60" height="18" fill="rgba(0,123,255,0.3)" stroke="#007bff" stroke-width="4.5"/><text x="1371.5" y="1227.6" font-size="18" fill="#666">Top 3</text><rect x="1430" y="1214" width="60" height="18" fill="rgba(40,167,69,0.3)" stroke="#28a745" stroke-width="4.5"/><text x="1499" y="1227.6" font-size="18" fill="#666">Top 10</text></svg>
</body></html>
